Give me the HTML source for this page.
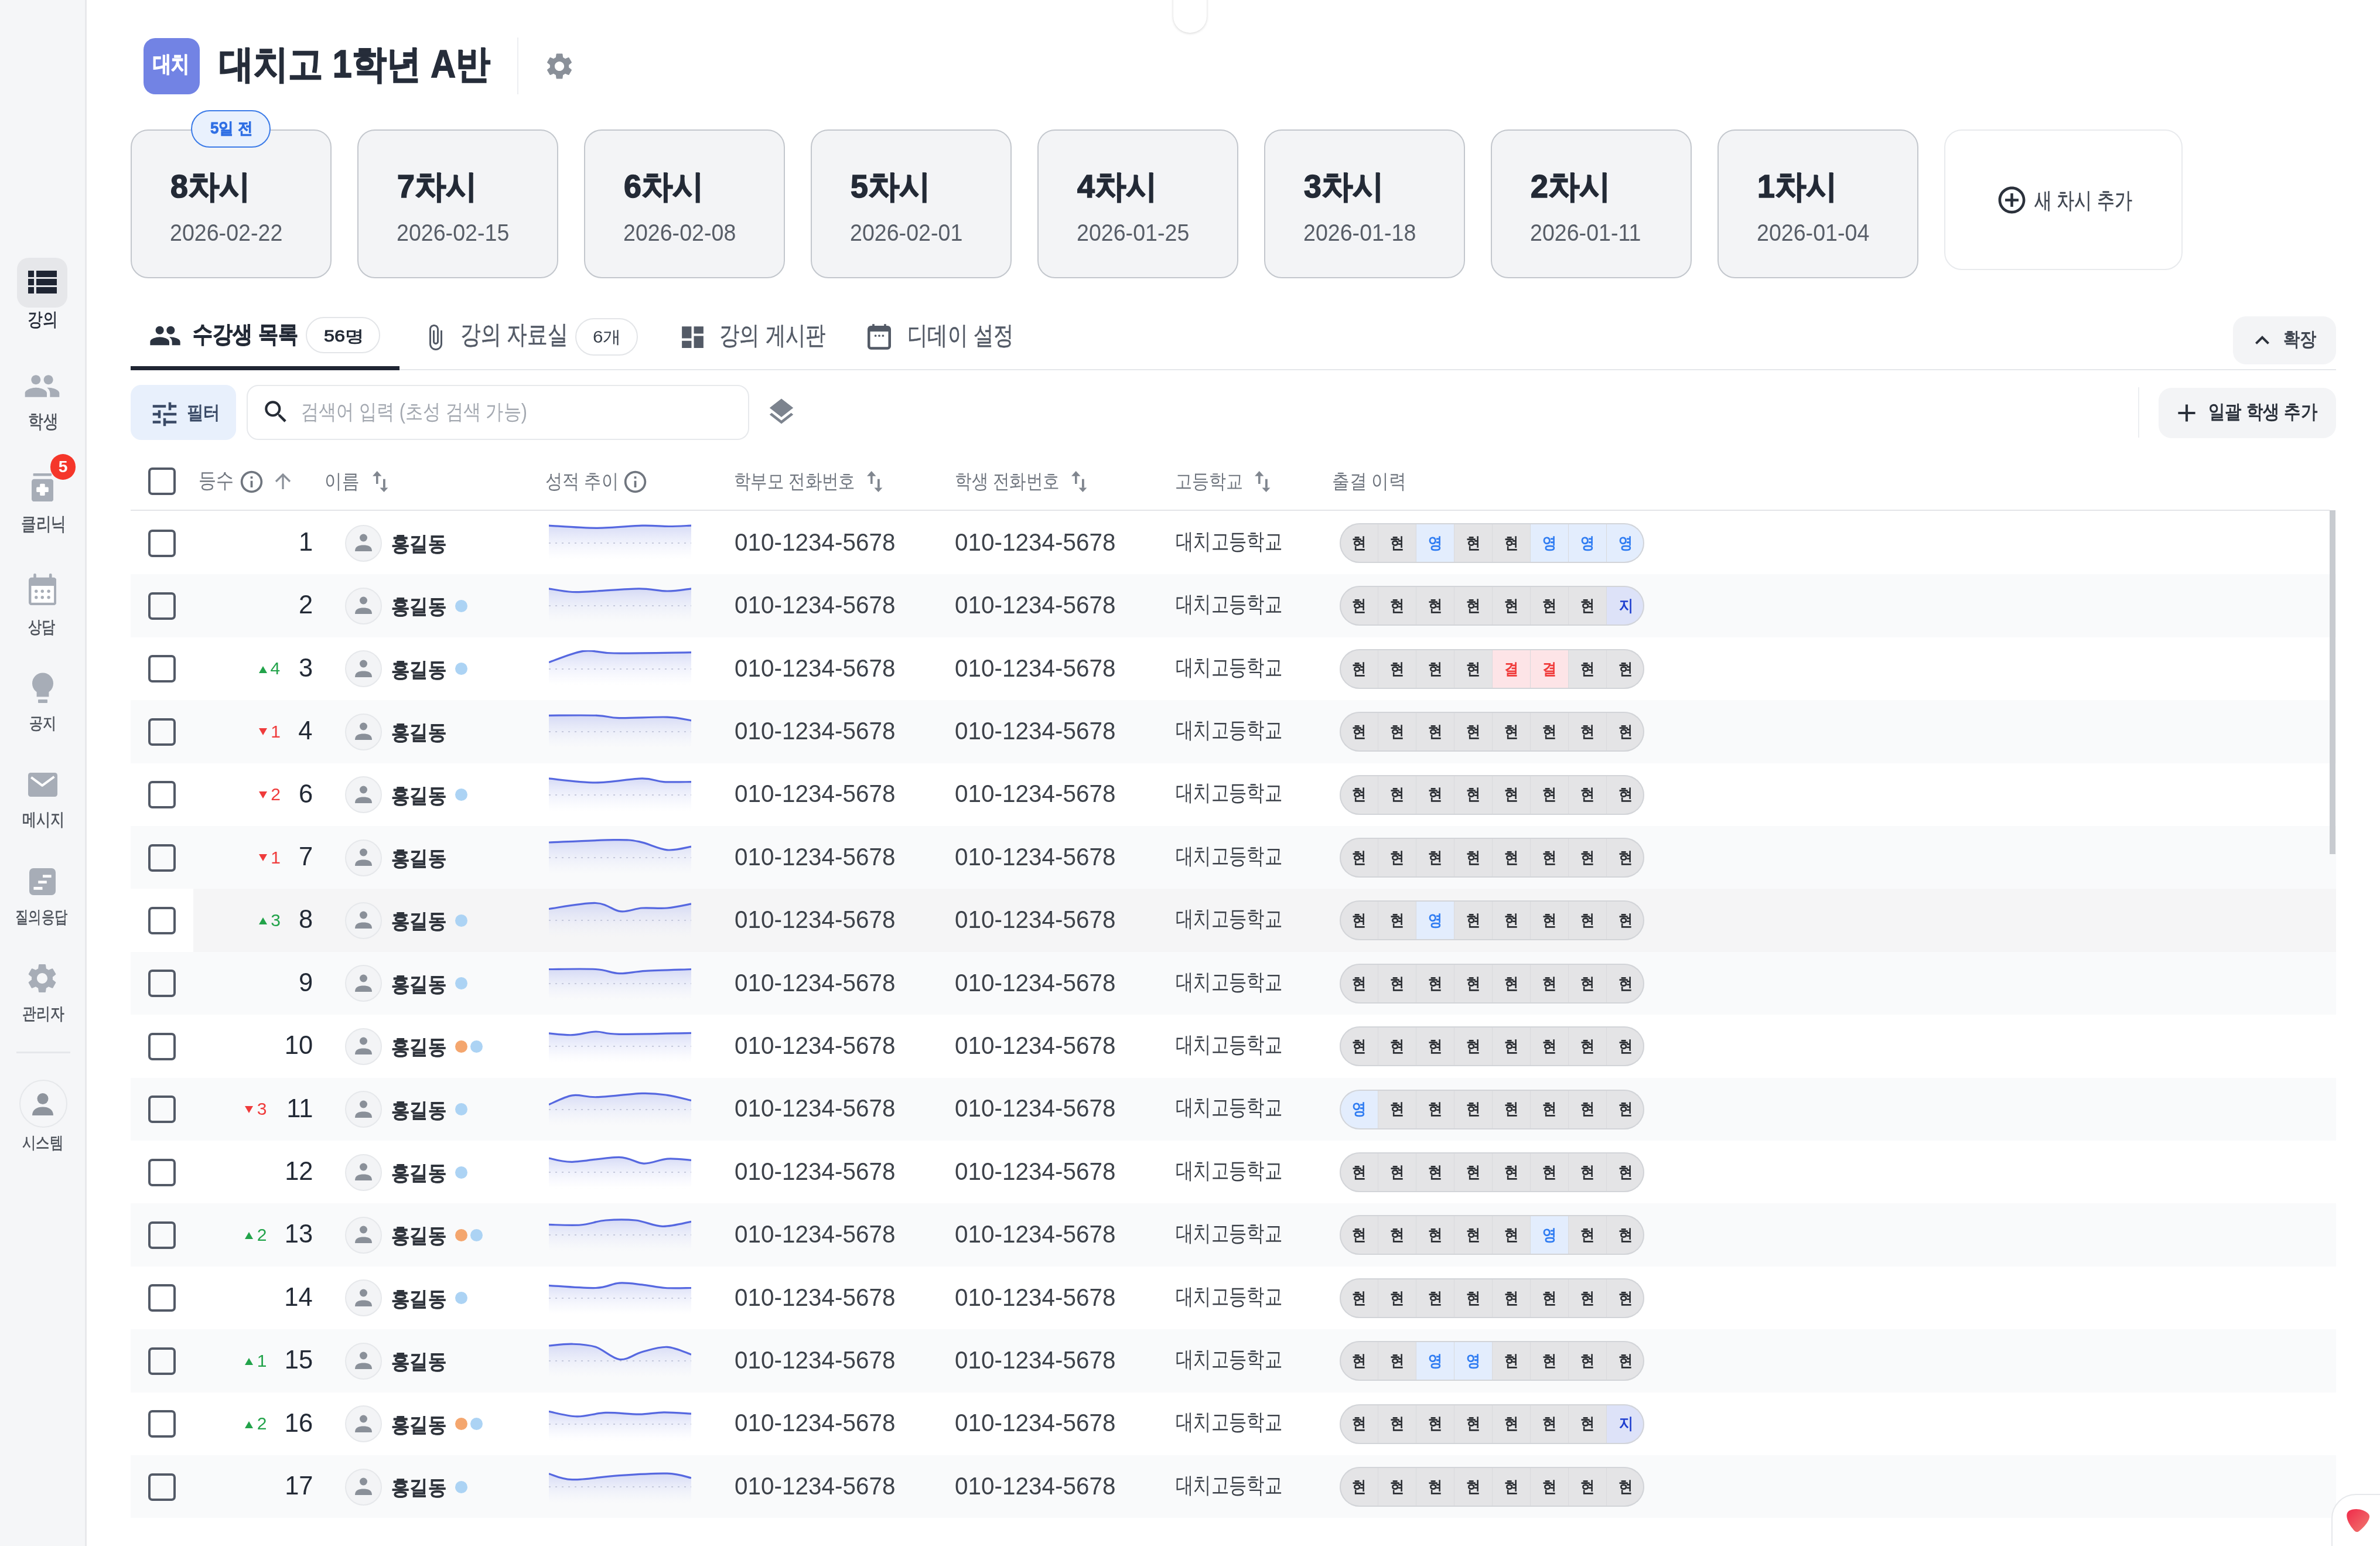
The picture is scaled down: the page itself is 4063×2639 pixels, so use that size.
<!DOCTYPE html><html><head><meta charset="utf-8"><style>
html,body{margin:0;padding:0}
body{width:4063px;height:2639px;position:relative;overflow:hidden;background:#fff;font-family:"Liberation Sans", sans-serif}
.t{position:absolute;white-space:nowrap;line-height:1;transform-origin:0 0}
.a{position:absolute}
</style></head><body><div style="position:absolute;left:0;top:0;width:4063px;height:2639px;filter:blur(0.6px)"><div class="a" style="left:0;top:0;width:145px;height:2639px;background:#f5f6f8;border-right:3px solid #e8e9eb"></div><div class="a" style="left:29px;top:440px;width:86px;height:85px;border-radius:20px;background:#e6e7ea"></div><svg style="position:absolute;left:48px;top:462px;width:49px;height:39px" viewBox="0 0 49 39"><rect x="0" y="0" width="10" height="11" fill="#1f2533"/><rect x="0" y="14" width="10" height="11" fill="#1f2533"/><rect x="0" y="28" width="10" height="11" fill="#1f2533"/><rect x="14" y="0" width="35" height="11" fill="#1f2533"/><rect x="14" y="14" width="35" height="11" fill="#1f2533"/><rect x="14" y="28" width="35" height="11" fill="#1f2533"/></svg><svg style="position:absolute;left:40px;top:627px;width:64px;height:64px" viewBox="0 0 24 24"><path fill="#a7adb7" d="M16 11c1.66 0 2.99-1.34 2.99-3S17.66 5 16 5c-1.66 0-3 1.34-3 3s1.34 3 3 3zm-8 0c1.66 0 2.99-1.34 2.99-3S9.66 5 8 5C6.34 5 5 6.34 5 8s1.34 3 3 3zm0 2c-2.33 0-7 1.17-7 3.5V19h14v-2.5c0-2.33-4.670-3.5-7-3.5zm8 0c-.29 0-.62.02-.97.05 1.16.84 1.97 1.97 1.97 3.45V19h6v-2.5c0-2.33-4.67-3.5-7-3.5z"/></svg><svg style="position:absolute;left:53.9px;top:808px;width:37.2px;height:48.4px" viewBox="0 0 37.2 48.4"><rect x="2.6" y="0" width="31.5" height="4.6" rx="1" fill="#a7adb7"/><rect x="0" y="9.8" width="37.2" height="38.6" rx="4.5" fill="#a7adb7"/><rect x="14.2" y="17.7" width="8.5" height="20.3" rx="1.5" fill="#fff"/><rect x="8.2" y="23.6" width="20.6" height="8.5" rx="1.5" fill="#fff"/></svg><div class="a" style="left:85.5px;top:775px;width:43.5px;height:43.5px;border-radius:50%;background:#f5362a"></div><svg style="position:absolute;left:48.6px;top:978.6px;width:47.4px;height:54.2px" viewBox="0 0 47.4 54.2"><rect x="8.2" y="0" width="4.6" height="9" rx="2" fill="#a7adb7"/><rect x="34.9" y="0" width="4.7" height="9" rx="2" fill="#a7adb7"/><rect x="0" y="6.7" width="47.4" height="47.5" rx="5" fill="#a7adb7"/><rect x="4.4" y="21" width="38.7" height="28.8" fill="#fff"/><circle cx="12.8" cy="30.3" r="2.7" fill="#a7adb7"/><circle cx="12.8" cy="40.8" r="2.7" fill="#a7adb7"/><circle cx="23.3" cy="30.3" r="2.7" fill="#a7adb7"/><circle cx="23.3" cy="40.8" r="2.7" fill="#a7adb7"/><circle cx="34.1" cy="30.3" r="2.7" fill="#a7adb7"/><circle cx="34.1" cy="40.8" r="2.7" fill="#a7adb7"/></svg><svg style="position:absolute;left:54px;top:1148px;width:38px;height:53px" viewBox="0 0 38 53"><circle cx="19" cy="18.5" r="18" fill="#a7adb7"/><path d="M8.6 26 L29.4 26 L29.4 41.4 L8.6 41.4 Z" fill="#a7adb7"/><rect x="11" y="46" width="16" height="6" rx="1" fill="#a7adb7"/></svg><svg style="position:absolute;left:47.6px;top:1319px;width:50px;height:41px" viewBox="0 0 50 41"><rect x="0" y="0" width="50" height="41" rx="4.5" fill="#a7adb7"/><path d="M5.2 7.9 L24.1 21.9 L44.5 6.9" fill="none" stroke="#fff" stroke-width="4" stroke-linejoin="round"/></svg><svg style="position:absolute;left:50.2px;top:1481.6px;width:45px;height:46px" viewBox="0 0 45 46"><rect x="0" y="0" width="45" height="46" rx="7" fill="#a7adb7"/><rect x="23" y="11.4" width="14.6" height="4.6" fill="#fff"/><rect x="15.2" y="21.4" width="14.6" height="4.7" fill="#fff"/><rect x="7.4" y="31.9" width="15.1" height="4.9" fill="#fff"/></svg><svg style="position:absolute;left:42px;top:1640px;width:60px;height:60px" viewBox="0 0 24 24"><path fill="#a7adb7" d="M19.14 12.94c.04-.3.06-.61.06-.94 0-.32-.02-.64-.07-.94l2.03-1.58a.49.49 0 0 0 .12-.61l-1.92-3.32a.488.488 0 0 0-.59-.22l-2.39.96c-.5-.38-1.03-.7-1.62-.94l-.36-2.54a.484.484 0 0 0-.48-.41h-3.84c-.24 0-.43.17-.47.41l-.36 2.54c-.59.24-1.13.57-1.62.94l-2.39-.96c-.22-.08-.47 0-.59.22L2.74 8.87c-.12.21-.08.47.12.61l2.03 1.58c-.05.3-.09.63-.09.94s.02.64.07.94l-2.03 1.58a.49.49 0 0 0-.12.61l1.92 3.32c.12.22.37.29.59.22l2.39-.96c.5.38 1.03.7 1.62.94l.36 2.54c.05.24.24.41.48.41h3.84c.24 0 .44-.17.47-.41l.36-2.54c.59-.24 1.13-.56 1.62-.94l2.39.96c.22.08.47 0 .59-.22l1.92-3.32c.12-.22.07-.47-.12-.61l-2.01-1.58zM12 15.6c-1.98 0-3.6-1.62-3.6-3.6s1.62-3.6 3.6-3.6 3.6 1.62 3.6 3.6-1.62 3.6-3.6 3.6z"/></svg><div class="a" style="left:28px;top:1795px;width:92px;height:3px;background:#e5e7eb"></div><div class="a" style="left:33px;top:1843px;width:78px;height:78px;border-radius:50%;border:2px solid #e6e8eb"></div><svg style="position:absolute;left:55px;top:1866px;width:36px;height:38px" viewBox="0 0 36 38"><circle cx="18" cy="9.5" r="9.5" fill="#8e949d"/><path d="M0 38 C0 28 8 23.5 18 23.5 C28 23.5 36 28 36 38 Z" fill="#8e949d"/></svg><div class="a" style="left:245px;top:65px;width:96px;height:96px;border-radius:20px;background:#7283e4"></div><div class="a" style="left:883px;top:64px;width:2px;height:97px;background:#eceef1"></div><svg style="position:absolute;left:928px;top:86px;width:54px;height:54px" viewBox="0 0 24 24"><path fill="#8a9099" d="M19.14 12.94c.04-.3.06-.61.06-.94 0-.32-.02-.64-.07-.94l2.03-1.58a.49.49 0 0 0 .12-.61l-1.92-3.32a.488.488 0 0 0-.59-.22l-2.39.96c-.5-.38-1.03-.7-1.62-.94l-.36-2.54a.484.484 0 0 0-.48-.41h-3.84c-.24 0-.43.17-.47.41l-.36 2.54c-.59.24-1.13.57-1.62.94l-2.39-.96c-.22-.08-.47 0-.59.22L2.74 8.87c-.12.21-.08.47.12.61l2.03 1.58c-.05.3-.09.63-.09.94s.02.64.07.94l-2.03 1.58a.49.49 0 0 0-.12.61l1.92 3.32c.12.22.37.29.59.22l2.39-.96c.5.38 1.03.7 1.62.94l.36 2.54c.05.24.24.41.48.41h3.84c.24 0 .44-.17.47-.41l.36-2.54c.59-.24 1.13-.56 1.62-.94l2.39.96c.22.08.47 0 .59-.22l1.92-3.32c.12-.22.07-.47-.12-.61l-2.01-1.58zM12 15.6c-1.98 0-3.6-1.62-3.6-3.6s1.62-3.6 3.6-3.6 3.6 1.62 3.6 3.6-1.62 3.6-3.6 3.6z"/></svg><div class="a" style="left:2003px;top:-40px;width:57px;height:96px;border-radius:28px;background:#fff;box-shadow:0 1px 4px rgba(0,0,0,0.18)"></div><div class="a" style="left:223px;top:221px;width:339px;height:250px;border:2.5px solid #c3c7cd;border-radius:30px;background:#f3f4f6"></div><div class="a" style="left:610px;top:221px;width:339px;height:250px;border:2.5px solid #c3c7cd;border-radius:30px;background:#f3f4f6"></div><div class="a" style="left:997px;top:221px;width:339px;height:250px;border:2.5px solid #c3c7cd;border-radius:30px;background:#f3f4f6"></div><div class="a" style="left:1384px;top:221px;width:339px;height:250px;border:2.5px solid #c3c7cd;border-radius:30px;background:#f3f4f6"></div><div class="a" style="left:1771px;top:221px;width:339px;height:250px;border:2.5px solid #c3c7cd;border-radius:30px;background:#f3f4f6"></div><div class="a" style="left:2158px;top:221px;width:339px;height:250px;border:2.5px solid #c3c7cd;border-radius:30px;background:#f3f4f6"></div><div class="a" style="left:2545px;top:221px;width:339px;height:250px;border:2.5px solid #c3c7cd;border-radius:30px;background:#f3f4f6"></div><div class="a" style="left:2932px;top:221px;width:339px;height:250px;border:2.5px solid #c3c7cd;border-radius:30px;background:#f3f4f6"></div><div class="a" style="left:326px;top:188px;width:132px;height:60px;border:2.5px solid #3b7be8;border-radius:32px;background:#e9f1fd"></div><div class="a" style="left:3319px;top:221px;width:403px;height:236px;border:2px solid #e8eaed;border-radius:30px;background:#fff"></div><svg style="position:absolute;left:3407px;top:314px;width:55px;height:55px" viewBox="0 0 24 24"><path fill="#2b313b" d="M13 7h-2v4H7v2h4v4h2v-4h4v-2h-4V7zm-1-5C6.48 2 2 6.48 2 12s4.48 10 10 10 10-4.480 10-10S17.52 2 12 2zm0 18c-4.41 0-8-3.59-8-8s3.59-8 8-8 8 3.59 8 8-3.59 8-8 8z"/></svg><div class="a" style="left:223px;top:630px;width:3765px;height:2px;background:#e5e7eb"></div><div class="a" style="left:223px;top:625px;width:459px;height:7px;background:#1f2533"></div><svg style="position:absolute;left:254px;top:545px;width:56px;height:56px" viewBox="0 0 24 24"><path fill="#2b3340" d="M16 11c1.66 0 2.99-1.34 2.99-3S17.66 5 16 5c-1.66 0-3 1.34-3 3s1.34 3 3 3zm-8 0c1.66 0 2.99-1.34 2.99-3S9.66 5 8 5C6.34 5 5 6.34 5 8s1.34 3 3 3zm0 2c-2.33 0-7 1.17-7 3.5V19h14v-2.5c0-2.33-4.670-3.5-7-3.5zm8 0c-.29 0-.62.02-.97.05 1.16.84 1.97 1.97 1.97 3.45V19h6v-2.5c0-2.33-4.67-3.5-7-3.5z"/></svg><div class="a" style="left:522px;top:541px;width:123px;height:58px;border:2px solid #e3e5e8;border-radius:32px"></div><svg style="position:absolute;left:719px;top:551px;width:48px;height:50px" viewBox="0 0 24 24"><path fill="#535a66" d="M16.5 6v11.5c0 2.21-1.790 4-4 4s-4-1.79-4-4V5c0-1.38 1.12-2.5 2.5-2.5s2.5 1.12 2.5 2.5v10.5c0 .55-.45 1-1 1s-1-.45-1-1V6H10v9.5c0 1.38 1.12 2.5 2.5 2.5s2.5-1.12 2.5-2.5V5c0-2.21-1.79-4-4-4S7 2.79 7 5v12.5c0 3.04 2.46 5.5 5.5 5.5s5.5-2.46 5.5-5.5V6h-1.5z"/></svg><div class="a" style="left:982px;top:543px;width:103px;height:60px;border:2px solid #e3e5e8;border-radius:32px"></div><svg style="position:absolute;left:1158px;top:551px;width:49px;height:49px" viewBox="0 0 24 24"><path fill="#535a66" d="M3 13h8V3H3v10zm0 8h8v-6H3v6zm10 0h8V11h-8v10zm0-18v6h8V3h-8z"/></svg><svg style="position:absolute;left:1481px;top:553px;width:40px;height:44px" viewBox="0 0 44 48"><rect x="9" y="0" width="4" height="8" fill="#535a66"/><rect x="31" y="0" width="4" height="8" fill="#535a66"/><rect x="2.5" y="5.5" width="39" height="40" rx="4" fill="none" stroke="#535a66" stroke-width="5"/><rect x="2" y="5" width="40" height="9" fill="#535a66"/><circle cx="15" cy="22" r="2" fill="#535a66"/><circle cx="22" cy="22" r="2" fill="#535a66"/><circle cx="29" cy="22" r="2" fill="#535a66"/></svg><div class="a" style="left:3812px;top:540px;width:176px;height:82px;border-radius:22px;background:#f3f4f6"></div><svg style="position:absolute;left:3838px;top:557px;width:48px;height:48px" viewBox="0 0 24 24"><path fill="#2b313b" d="M12 8l-6 6 1.41 1.41L12 10.83l4.59 4.58L18 14z"/></svg><div class="a" style="left:223px;top:657px;width:180px;height:94px;border-radius:18px;background:#e8f0fc"></div><svg style="position:absolute;left:254px;top:680px;width:54px;height:54px" viewBox="0 0 24 24"><path fill="#3a4a66" d="M3 17v2h6v-2H3zM3 5v2h10V5H3zm10 16v-2h8v-2h-8v-2h-2v6h2zM7 9v2H3v2h4v2h2V9H7zm14 4v-2H11v2h10zm-6-4h2V7h4V5h-4V3h-2v6z"/></svg><div class="a" style="left:421px;top:657px;width:854px;height:90px;border:2px solid #e7e9ec;border-radius:20px;background:#fff"></div><svg style="position:absolute;left:446px;top:678px;width:50px;height:50px" viewBox="0 0 24 24"><path fill="#252b35" d="M15.5 14h-.79l-.28-.27A6.471 6.471 0 0 0 16 9.5 6.5 6.5 0 1 0 9.5 16c1.61 0 3.09-.59 4.23-1.57l.27.28v.79l5 4.99L20.49 19l-4.99-5zm-6 0C7.01 14 5 11.99 5 9.5S7.01 5 9.5 5 14 7.01 14 9.5 11.99 14 9.5 14z"/></svg><svg style="position:absolute;left:1307px;top:676px;width:54px;height:54px" viewBox="0 0 24 24"><path fill="#7c838e" d="M11.99 18.54l-7.37-5.73L3 14.07l9 7 9-7-1.63-1.27-7.38 5.74zM12 16l7.36-5.73L21 9l-9-7-9 7 1.63 1.27L12 16z"/></svg><div class="a" style="left:3650px;top:661px;width:2px;height:86px;background:#eceef1"></div><div class="a" style="left:3685px;top:662px;width:303px;height:86px;border-radius:22px;background:#f3f4f6"></div><svg style="position:absolute;left:3708px;top:680px;width:50px;height:50px" viewBox="0 0 24 24"><path fill="#2b313b" d="M19 13h-6v6h-2v-6H5v-2h6V5h2v6h6v2z"/></svg><div class="a" style="left:253px;top:798px;width:47px;height:47px;box-sizing:border-box;border:4.7px solid #535a67;border-radius:7px"></div><svg style="position:absolute;left:407px;top:800px;width:45px;height:45px" viewBox="0 0 24 24"><path fill="#70767f" d="M11 7h2v2h-2zm0 4h2v6h-2zm1-9C6.48 2 2 6.48 2 12s4.48 10 10 10 10-4.48 10-10S17.52 2 12 2zm0 18c-4.41 0-8-3.59-8-8s3.59-8 8-8 8 3.59 8 8-3.59 8-8 8z"/></svg><svg style="position:absolute;left:469px;top:808px;width:28px;height:28px" viewBox="0 0 28 28"><path d="M14 27V3M2 14L14 2L26 14" fill="none" stroke="#8a9099" stroke-width="3.2"/></svg><svg style="position:absolute;left:636px;top:804px;width:27px;height:36px" viewBox="0 0 27 36"><polygon points="0,8.7 7.75,0 15.5,8.7" fill="#80868f"/><rect x="6" y="8" width="3.6" height="14" fill="#80868f"/><rect x="18" y="13.7" width="3.8" height="15" fill="#80868f"/><polygon points="12.5,28.4 26.4,28.4 19.5,36" fill="#80868f"/></svg><svg style="position:absolute;left:1062px;top:800px;width:45px;height:45px" viewBox="0 0 24 24"><path fill="#70767f" d="M11 7h2v2h-2zm0 4h2v6h-2zm1-9C6.48 2 2 6.48 2 12s4.48 10 10 10 10-4.48 10-10S17.52 2 12 2zm0 18c-4.41 0-8-3.59-8-8s3.59-8 8-8 8 3.59 8 8-3.59 8-8 8z"/></svg><svg style="position:absolute;left:1480px;top:804px;width:27px;height:36px" viewBox="0 0 27 36"><polygon points="0,8.7 7.75,0 15.5,8.7" fill="#80868f"/><rect x="6" y="8" width="3.6" height="14" fill="#80868f"/><rect x="18" y="13.7" width="3.8" height="15" fill="#80868f"/><polygon points="12.5,28.4 26.4,28.4 19.5,36" fill="#80868f"/></svg><svg style="position:absolute;left:1829px;top:804px;width:27px;height:36px" viewBox="0 0 27 36"><polygon points="0,8.7 7.75,0 15.5,8.7" fill="#80868f"/><rect x="6" y="8" width="3.6" height="14" fill="#80868f"/><rect x="18" y="13.7" width="3.8" height="15" fill="#80868f"/><polygon points="12.5,28.4 26.4,28.4 19.5,36" fill="#80868f"/></svg><svg style="position:absolute;left:2142px;top:804px;width:27px;height:36px" viewBox="0 0 27 36"><polygon points="0,8.7 7.75,0 15.5,8.7" fill="#80868f"/><rect x="6" y="8" width="3.6" height="14" fill="#80868f"/><rect x="18" y="13.7" width="3.8" height="15" fill="#80868f"/><polygon points="12.5,28.4 26.4,28.4 19.5,36" fill="#80868f"/></svg><div class="a" style="left:223px;top:870px;width:3754px;height:2px;background:#e3e5e8"></div><div class="a" style="left:253px;top:903.5px;width:47px;height:47px;box-sizing:border-box;border:4.7px solid #535a67;border-radius:7px"></div><div class="a" style="left:588.5px;top:895.5px;width:59px;height:59px;border-radius:50%;background:#f3f4f6;border:2px solid #e6e8eb"></div><svg style="position:absolute;left:604px;top:911.0px;width:34px;height:34px" viewBox="0 0 34 34"><circle cx="16.5" cy="7" r="6.5" fill="#8a9099"/><path d="M2 30 C2 21 9 19.5 16.5 19.5 C24 19.5 31 21 31 30 Z" fill="#8a9099"/></svg><svg style="position:absolute;left:937px;top:895.0px;width:243px;height:60px" viewBox="0 0 243 60"><defs><linearGradient id="g0" x1="0" y1="0" x2="0" y2="1"><stop offset="0" stop-color="#c9cff3" stop-opacity="0.75"/><stop offset="1" stop-color="#e6e9fa" stop-opacity="0"/></linearGradient></defs><path d="M0,2.1 C13.8,2.8 56.0,6.3 82.5,6.3 C109.0,6.3 138.6,2.6 159,2.1 C179.4,1.6 191.0,3.5 205,3.5 C219.0,3.5 236.7,2.3 243,2.1 L243,60 L0,60 Z" fill="url(#g0)"/><line x1="0" y1="32" x2="243" y2="32" stroke="#c5c9dc" stroke-width="2" stroke-dasharray="3 8"/><path d="M0,2.1 C13.8,2.8 56.0,6.3 82.5,6.3 C109.0,6.3 138.6,2.6 159,2.1 C179.4,1.6 191.0,3.5 205,3.5 C219.0,3.5 236.7,2.3 243,2.1" fill="none" stroke="#5668e0" stroke-width="3.2"/></svg><div class="a" style="left:2287px;top:893.0px;width:520px;height:68px;border-radius:34px;overflow:hidden;box-shadow:inset 0 0 0 2px #d2d4d8"><div style="position:absolute;left:0px;top:0;width:65px;height:68px;background:#e4e4e6;box-sizing:border-box"></div><div style="position:absolute;left:65px;top:0;width:65px;height:68px;background:#e4e4e6;border-left:1px solid #d9dadd;box-sizing:border-box"></div><div style="position:absolute;left:130px;top:0;width:65px;height:68px;background:#e3edfd;border-left:1px solid #d9dadd;box-sizing:border-box"></div><div style="position:absolute;left:195px;top:0;width:65px;height:68px;background:#e4e4e6;border-left:1px solid #d9dadd;box-sizing:border-box"></div><div style="position:absolute;left:260px;top:0;width:65px;height:68px;background:#e4e4e6;border-left:1px solid #d9dadd;box-sizing:border-box"></div><div style="position:absolute;left:325px;top:0;width:65px;height:68px;background:#e3edfd;border-left:1px solid #d9dadd;box-sizing:border-box"></div><div style="position:absolute;left:390px;top:0;width:65px;height:68px;background:#e3edfd;border-left:1px solid #d9dadd;box-sizing:border-box"></div><div style="position:absolute;left:455px;top:0;width:65px;height:68px;background:#e3edfd;border-left:1px solid #d9dadd;box-sizing:border-box"></div><div style="position:absolute;inset:0;border-radius:34px;box-shadow:inset 0 0 0 2px #d2d4d8"></div></div><div class="a" style="left:223px;top:980.4px;width:3765px;height:107.4px;background:#f9fafb"></div><div class="a" style="left:253px;top:1010.9px;width:47px;height:47px;box-sizing:border-box;border:4.7px solid #535a67;border-radius:7px"></div><div class="a" style="left:588.5px;top:1002.9px;width:59px;height:59px;border-radius:50%;background:#f3f4f6;border:2px solid #e6e8eb"></div><svg style="position:absolute;left:604px;top:1018.4000000000001px;width:34px;height:34px" viewBox="0 0 34 34"><circle cx="16.5" cy="7" r="6.5" fill="#8a9099"/><path d="M2 30 C2 21 9 19.5 16.5 19.5 C24 19.5 31 21 31 30 Z" fill="#8a9099"/></svg><div class="a" style="left:777px;top:1023.9px;width:21px;height:21px;border-radius:50%;background:#acd3f4"></div><svg style="position:absolute;left:937px;top:1002.4px;width:243px;height:60px" viewBox="0 0 243 60"><defs><linearGradient id="g1" x1="0" y1="0" x2="0" y2="1"><stop offset="0" stop-color="#c9cff3" stop-opacity="0.75"/><stop offset="1" stop-color="#e6e9fa" stop-opacity="0"/></linearGradient></defs><path d="M0,2.8 C6.7,3.8 26.3,7.8 40,8.5 C53.7,9.2 63.0,8.0 82,7 C101.0,6.0 134.0,2.8 154,2.8 C174.0,2.8 187.2,7.0 202,7 C216.8,7.0 236.2,3.5 243,2.8 L243,60 L0,60 Z" fill="url(#g1)"/><line x1="0" y1="32" x2="243" y2="32" stroke="#c5c9dc" stroke-width="2" stroke-dasharray="3 8"/><path d="M0,2.8 C6.7,3.8 26.3,7.8 40,8.5 C53.7,9.2 63.0,8.0 82,7 C101.0,6.0 134.0,2.8 154,2.8 C174.0,2.8 187.2,7.0 202,7 C216.8,7.0 236.2,3.5 243,2.8" fill="none" stroke="#5668e0" stroke-width="3.2"/></svg><div class="a" style="left:2287px;top:1000.4px;width:520px;height:68px;border-radius:34px;overflow:hidden;box-shadow:inset 0 0 0 2px #d2d4d8"><div style="position:absolute;left:0px;top:0;width:65px;height:68px;background:#e4e4e6;box-sizing:border-box"></div><div style="position:absolute;left:65px;top:0;width:65px;height:68px;background:#e4e4e6;border-left:1px solid #d9dadd;box-sizing:border-box"></div><div style="position:absolute;left:130px;top:0;width:65px;height:68px;background:#e4e4e6;border-left:1px solid #d9dadd;box-sizing:border-box"></div><div style="position:absolute;left:195px;top:0;width:65px;height:68px;background:#e4e4e6;border-left:1px solid #d9dadd;box-sizing:border-box"></div><div style="position:absolute;left:260px;top:0;width:65px;height:68px;background:#e4e4e6;border-left:1px solid #d9dadd;box-sizing:border-box"></div><div style="position:absolute;left:325px;top:0;width:65px;height:68px;background:#e4e4e6;border-left:1px solid #d9dadd;box-sizing:border-box"></div><div style="position:absolute;left:390px;top:0;width:65px;height:68px;background:#e4e4e6;border-left:1px solid #d9dadd;box-sizing:border-box"></div><div style="position:absolute;left:455px;top:0;width:65px;height:68px;background:#dde2f8;border-left:1px solid #d9dadd;box-sizing:border-box"></div><div style="position:absolute;inset:0;border-radius:34px;box-shadow:inset 0 0 0 2px #d2d4d8"></div></div><div class="a" style="left:253px;top:1118.3px;width:47px;height:47px;box-sizing:border-box;border:4.7px solid #535a67;border-radius:7px"></div><svg style="position:absolute;left:441.8px;top:1136.8px;width:14px;height:12px" viewBox="0 0 14 12"><polygon points="0,12 7,0 14,12" fill="#22a34a"/></svg><div class="a" style="left:588.5px;top:1110.3px;width:59px;height:59px;border-radius:50%;background:#f3f4f6;border:2px solid #e6e8eb"></div><svg style="position:absolute;left:604px;top:1125.8px;width:34px;height:34px" viewBox="0 0 34 34"><circle cx="16.5" cy="7" r="6.5" fill="#8a9099"/><path d="M2 30 C2 21 9 19.5 16.5 19.5 C24 19.5 31 21 31 30 Z" fill="#8a9099"/></svg><div class="a" style="left:777px;top:1131.3px;width:21px;height:21px;border-radius:50%;background:#acd3f4"></div><svg style="position:absolute;left:937px;top:1109.8px;width:243px;height:60px" viewBox="0 0 243 60"><defs><linearGradient id="g2" x1="0" y1="0" x2="0" y2="1"><stop offset="0" stop-color="#c9cff3" stop-opacity="0.75"/><stop offset="1" stop-color="#e6e9fa" stop-opacity="0"/></linearGradient></defs><path d="M0,20.6 C9.8,17.4 40.5,3.9 59,1.3 C77.5,-1.3 80.3,4.6 111,5 C141.7,5.4 221.0,3.8 243,3.6 L243,60 L0,60 Z" fill="url(#g2)"/><line x1="0" y1="32" x2="243" y2="32" stroke="#c5c9dc" stroke-width="2" stroke-dasharray="3 8"/><path d="M0,20.6 C9.8,17.4 40.5,3.9 59,1.3 C77.5,-1.3 80.3,4.6 111,5 C141.7,5.4 221.0,3.8 243,3.6" fill="none" stroke="#5668e0" stroke-width="3.2"/></svg><div class="a" style="left:2287px;top:1107.8px;width:520px;height:68px;border-radius:34px;overflow:hidden;box-shadow:inset 0 0 0 2px #d2d4d8"><div style="position:absolute;left:0px;top:0;width:65px;height:68px;background:#e4e4e6;box-sizing:border-box"></div><div style="position:absolute;left:65px;top:0;width:65px;height:68px;background:#e4e4e6;border-left:1px solid #d9dadd;box-sizing:border-box"></div><div style="position:absolute;left:130px;top:0;width:65px;height:68px;background:#e4e4e6;border-left:1px solid #d9dadd;box-sizing:border-box"></div><div style="position:absolute;left:195px;top:0;width:65px;height:68px;background:#e4e4e6;border-left:1px solid #d9dadd;box-sizing:border-box"></div><div style="position:absolute;left:260px;top:0;width:65px;height:68px;background:#fde4e7;border-left:1px solid #d9dadd;box-sizing:border-box"></div><div style="position:absolute;left:325px;top:0;width:65px;height:68px;background:#fde4e7;border-left:1px solid #d9dadd;box-sizing:border-box"></div><div style="position:absolute;left:390px;top:0;width:65px;height:68px;background:#e4e4e6;border-left:1px solid #d9dadd;box-sizing:border-box"></div><div style="position:absolute;left:455px;top:0;width:65px;height:68px;background:#e4e4e6;border-left:1px solid #d9dadd;box-sizing:border-box"></div><div style="position:absolute;inset:0;border-radius:34px;box-shadow:inset 0 0 0 2px #d2d4d8"></div></div><div class="a" style="left:223px;top:1195.2px;width:3765px;height:107.4px;background:#f9fafb"></div><div class="a" style="left:253px;top:1225.7px;width:47px;height:47px;box-sizing:border-box;border:4.7px solid #535a67;border-radius:7px"></div><svg style="position:absolute;left:441.8px;top:1243.2px;width:14px;height:12px" viewBox="0 0 14 12"><polygon points="0,0 14,0 7,12" fill="#ef3b3b"/></svg><div class="a" style="left:588.5px;top:1217.7px;width:59px;height:59px;border-radius:50%;background:#f3f4f6;border:2px solid #e6e8eb"></div><svg style="position:absolute;left:604px;top:1233.2px;width:34px;height:34px" viewBox="0 0 34 34"><circle cx="16.5" cy="7" r="6.5" fill="#8a9099"/><path d="M2 30 C2 21 9 19.5 16.5 19.5 C24 19.5 31 21 31 30 Z" fill="#8a9099"/></svg><svg style="position:absolute;left:937px;top:1217.2px;width:243px;height:60px" viewBox="0 0 243 60"><defs><linearGradient id="g3" x1="0" y1="0" x2="0" y2="1"><stop offset="0" stop-color="#c9cff3" stop-opacity="0.75"/><stop offset="1" stop-color="#e6e9fa" stop-opacity="0"/></linearGradient></defs><path d="M0,4.3 C13.7,4.3 62.0,3.6 82,4.3 C102.0,5.0 100.0,8.1 120,8.6 C140.0,9.1 181.5,6.4 202,7.1 C222.5,7.8 236.2,11.9 243,12.8 L243,60 L0,60 Z" fill="url(#g3)"/><line x1="0" y1="32" x2="243" y2="32" stroke="#c5c9dc" stroke-width="2" stroke-dasharray="3 8"/><path d="M0,4.3 C13.7,4.3 62.0,3.6 82,4.3 C102.0,5.0 100.0,8.1 120,8.6 C140.0,9.1 181.5,6.4 202,7.1 C222.5,7.8 236.2,11.9 243,12.8" fill="none" stroke="#5668e0" stroke-width="3.2"/></svg><div class="a" style="left:2287px;top:1215.2px;width:520px;height:68px;border-radius:34px;overflow:hidden;box-shadow:inset 0 0 0 2px #d2d4d8"><div style="position:absolute;left:0px;top:0;width:65px;height:68px;background:#e4e4e6;box-sizing:border-box"></div><div style="position:absolute;left:65px;top:0;width:65px;height:68px;background:#e4e4e6;border-left:1px solid #d9dadd;box-sizing:border-box"></div><div style="position:absolute;left:130px;top:0;width:65px;height:68px;background:#e4e4e6;border-left:1px solid #d9dadd;box-sizing:border-box"></div><div style="position:absolute;left:195px;top:0;width:65px;height:68px;background:#e4e4e6;border-left:1px solid #d9dadd;box-sizing:border-box"></div><div style="position:absolute;left:260px;top:0;width:65px;height:68px;background:#e4e4e6;border-left:1px solid #d9dadd;box-sizing:border-box"></div><div style="position:absolute;left:325px;top:0;width:65px;height:68px;background:#e4e4e6;border-left:1px solid #d9dadd;box-sizing:border-box"></div><div style="position:absolute;left:390px;top:0;width:65px;height:68px;background:#e4e4e6;border-left:1px solid #d9dadd;box-sizing:border-box"></div><div style="position:absolute;left:455px;top:0;width:65px;height:68px;background:#e4e4e6;border-left:1px solid #d9dadd;box-sizing:border-box"></div><div style="position:absolute;inset:0;border-radius:34px;box-shadow:inset 0 0 0 2px #d2d4d8"></div></div><div class="a" style="left:253px;top:1333.1px;width:47px;height:47px;box-sizing:border-box;border:4.7px solid #535a67;border-radius:7px"></div><svg style="position:absolute;left:441.8px;top:1350.6px;width:14px;height:12px" viewBox="0 0 14 12"><polygon points="0,0 14,0 7,12" fill="#ef3b3b"/></svg><div class="a" style="left:588.5px;top:1325.1px;width:59px;height:59px;border-radius:50%;background:#f3f4f6;border:2px solid #e6e8eb"></div><svg style="position:absolute;left:604px;top:1340.6px;width:34px;height:34px" viewBox="0 0 34 34"><circle cx="16.5" cy="7" r="6.5" fill="#8a9099"/><path d="M2 30 C2 21 9 19.5 16.5 19.5 C24 19.5 31 21 31 30 Z" fill="#8a9099"/></svg><div class="a" style="left:777px;top:1346.1px;width:21px;height:21px;border-radius:50%;background:#acd3f4"></div><svg style="position:absolute;left:937px;top:1324.6px;width:243px;height:60px" viewBox="0 0 243 60"><defs><linearGradient id="g4" x1="0" y1="0" x2="0" y2="1"><stop offset="0" stop-color="#c9cff3" stop-opacity="0.75"/><stop offset="1" stop-color="#e6e9fa" stop-opacity="0"/></linearGradient></defs><path d="M0,3.9 C13.3,5.1 53.5,10.9 80,10.9 C106.5,10.9 139.7,4.1 159,3.9 C178.3,3.7 182.0,8.7 196,9.6 C210.0,10.5 235.2,9.6 243,9.6 L243,60 L0,60 Z" fill="url(#g4)"/><line x1="0" y1="32" x2="243" y2="32" stroke="#c5c9dc" stroke-width="2" stroke-dasharray="3 8"/><path d="M0,3.9 C13.3,5.1 53.5,10.9 80,10.9 C106.5,10.9 139.7,4.1 159,3.9 C178.3,3.7 182.0,8.7 196,9.6 C210.0,10.5 235.2,9.6 243,9.6" fill="none" stroke="#5668e0" stroke-width="3.2"/></svg><div class="a" style="left:2287px;top:1322.6px;width:520px;height:68px;border-radius:34px;overflow:hidden;box-shadow:inset 0 0 0 2px #d2d4d8"><div style="position:absolute;left:0px;top:0;width:65px;height:68px;background:#e4e4e6;box-sizing:border-box"></div><div style="position:absolute;left:65px;top:0;width:65px;height:68px;background:#e4e4e6;border-left:1px solid #d9dadd;box-sizing:border-box"></div><div style="position:absolute;left:130px;top:0;width:65px;height:68px;background:#e4e4e6;border-left:1px solid #d9dadd;box-sizing:border-box"></div><div style="position:absolute;left:195px;top:0;width:65px;height:68px;background:#e4e4e6;border-left:1px solid #d9dadd;box-sizing:border-box"></div><div style="position:absolute;left:260px;top:0;width:65px;height:68px;background:#e4e4e6;border-left:1px solid #d9dadd;box-sizing:border-box"></div><div style="position:absolute;left:325px;top:0;width:65px;height:68px;background:#e4e4e6;border-left:1px solid #d9dadd;box-sizing:border-box"></div><div style="position:absolute;left:390px;top:0;width:65px;height:68px;background:#e4e4e6;border-left:1px solid #d9dadd;box-sizing:border-box"></div><div style="position:absolute;left:455px;top:0;width:65px;height:68px;background:#e4e4e6;border-left:1px solid #d9dadd;box-sizing:border-box"></div><div style="position:absolute;inset:0;border-radius:34px;box-shadow:inset 0 0 0 2px #d2d4d8"></div></div><div class="a" style="left:223px;top:1410.0px;width:3765px;height:107.4px;background:#f9fafb"></div><div class="a" style="left:253px;top:1440.5px;width:47px;height:47px;box-sizing:border-box;border:4.7px solid #535a67;border-radius:7px"></div><svg style="position:absolute;left:441.8px;top:1458.0px;width:14px;height:12px" viewBox="0 0 14 12"><polygon points="0,0 14,0 7,12" fill="#ef3b3b"/></svg><div class="a" style="left:588.5px;top:1432.5px;width:59px;height:59px;border-radius:50%;background:#f3f4f6;border:2px solid #e6e8eb"></div><svg style="position:absolute;left:604px;top:1448.0px;width:34px;height:34px" viewBox="0 0 34 34"><circle cx="16.5" cy="7" r="6.5" fill="#8a9099"/><path d="M2 30 C2 21 9 19.5 16.5 19.5 C24 19.5 31 21 31 30 Z" fill="#8a9099"/></svg><svg style="position:absolute;left:937px;top:1432.0px;width:243px;height:60px" viewBox="0 0 243 60"><defs><linearGradient id="g5" x1="0" y1="0" x2="0" y2="1"><stop offset="0" stop-color="#c9cff3" stop-opacity="0.75"/><stop offset="1" stop-color="#e6e9fa" stop-opacity="0"/></linearGradient></defs><path d="M0,6 C18.5,5.3 85.3,1.9 111,1.7 C136.7,1.5 138.8,1.7 154,4.6 C169.2,7.4 187.2,17.4 202,18.8 C216.8,20.2 236.2,14.1 243,13.1 L243,60 L0,60 Z" fill="url(#g5)"/><line x1="0" y1="32" x2="243" y2="32" stroke="#c5c9dc" stroke-width="2" stroke-dasharray="3 8"/><path d="M0,6 C18.5,5.3 85.3,1.9 111,1.7 C136.7,1.5 138.8,1.7 154,4.6 C169.2,7.4 187.2,17.4 202,18.8 C216.8,20.2 236.2,14.1 243,13.1" fill="none" stroke="#5668e0" stroke-width="3.2"/></svg><div class="a" style="left:2287px;top:1430.0px;width:520px;height:68px;border-radius:34px;overflow:hidden;box-shadow:inset 0 0 0 2px #d2d4d8"><div style="position:absolute;left:0px;top:0;width:65px;height:68px;background:#e4e4e6;box-sizing:border-box"></div><div style="position:absolute;left:65px;top:0;width:65px;height:68px;background:#e4e4e6;border-left:1px solid #d9dadd;box-sizing:border-box"></div><div style="position:absolute;left:130px;top:0;width:65px;height:68px;background:#e4e4e6;border-left:1px solid #d9dadd;box-sizing:border-box"></div><div style="position:absolute;left:195px;top:0;width:65px;height:68px;background:#e4e4e6;border-left:1px solid #d9dadd;box-sizing:border-box"></div><div style="position:absolute;left:260px;top:0;width:65px;height:68px;background:#e4e4e6;border-left:1px solid #d9dadd;box-sizing:border-box"></div><div style="position:absolute;left:325px;top:0;width:65px;height:68px;background:#e4e4e6;border-left:1px solid #d9dadd;box-sizing:border-box"></div><div style="position:absolute;left:390px;top:0;width:65px;height:68px;background:#e4e4e6;border-left:1px solid #d9dadd;box-sizing:border-box"></div><div style="position:absolute;left:455px;top:0;width:65px;height:68px;background:#e4e4e6;border-left:1px solid #d9dadd;box-sizing:border-box"></div><div style="position:absolute;inset:0;border-radius:34px;box-shadow:inset 0 0 0 2px #d2d4d8"></div></div><div class="a" style="left:330px;top:1517.4px;width:3658px;height:107.4px;background:#f5f5f6"></div><div class="a" style="left:253px;top:1547.9px;width:47px;height:47px;box-sizing:border-box;border:4.7px solid #535a67;border-radius:7px"></div><svg style="position:absolute;left:441.8px;top:1566.4px;width:14px;height:12px" viewBox="0 0 14 12"><polygon points="0,12 7,0 14,12" fill="#22a34a"/></svg><div class="a" style="left:588.5px;top:1539.9px;width:59px;height:59px;border-radius:50%;background:#f3f4f6;border:2px solid #e6e8eb"></div><svg style="position:absolute;left:604px;top:1555.4px;width:34px;height:34px" viewBox="0 0 34 34"><circle cx="16.5" cy="7" r="6.5" fill="#8a9099"/><path d="M2 30 C2 21 9 19.5 16.5 19.5 C24 19.5 31 21 31 30 Z" fill="#8a9099"/></svg><div class="a" style="left:777px;top:1560.9px;width:21px;height:21px;border-radius:50%;background:#acd3f4"></div><svg style="position:absolute;left:937px;top:1539.4px;width:243px;height:60px" viewBox="0 0 243 60"><defs><linearGradient id="g6" x1="0" y1="0" x2="0" y2="1"><stop offset="0" stop-color="#c9cff3" stop-opacity="0.75"/><stop offset="1" stop-color="#e6e9fa" stop-opacity="0"/></linearGradient></defs><path d="M0,12.5 C13.3,10.8 59.7,1.8 80,2.5 C100.3,3.2 108.8,15.3 122,16.7 C135.2,18.1 145.7,11.9 159,11 C172.3,10.1 188.0,12.2 202,11 C216.0,9.8 236.2,5.1 243,3.9 L243,60 L0,60 Z" fill="url(#g6)"/><line x1="0" y1="32" x2="243" y2="32" stroke="#c5c9dc" stroke-width="2" stroke-dasharray="3 8"/><path d="M0,12.5 C13.3,10.8 59.7,1.8 80,2.5 C100.3,3.2 108.8,15.3 122,16.7 C135.2,18.1 145.7,11.9 159,11 C172.3,10.1 188.0,12.2 202,11 C216.0,9.8 236.2,5.1 243,3.9" fill="none" stroke="#5668e0" stroke-width="3.2"/></svg><div class="a" style="left:2287px;top:1537.4px;width:520px;height:68px;border-radius:34px;overflow:hidden;box-shadow:inset 0 0 0 2px #d2d4d8"><div style="position:absolute;left:0px;top:0;width:65px;height:68px;background:#e4e4e6;box-sizing:border-box"></div><div style="position:absolute;left:65px;top:0;width:65px;height:68px;background:#e4e4e6;border-left:1px solid #d9dadd;box-sizing:border-box"></div><div style="position:absolute;left:130px;top:0;width:65px;height:68px;background:#e3edfd;border-left:1px solid #d9dadd;box-sizing:border-box"></div><div style="position:absolute;left:195px;top:0;width:65px;height:68px;background:#e4e4e6;border-left:1px solid #d9dadd;box-sizing:border-box"></div><div style="position:absolute;left:260px;top:0;width:65px;height:68px;background:#e4e4e6;border-left:1px solid #d9dadd;box-sizing:border-box"></div><div style="position:absolute;left:325px;top:0;width:65px;height:68px;background:#e4e4e6;border-left:1px solid #d9dadd;box-sizing:border-box"></div><div style="position:absolute;left:390px;top:0;width:65px;height:68px;background:#e4e4e6;border-left:1px solid #d9dadd;box-sizing:border-box"></div><div style="position:absolute;left:455px;top:0;width:65px;height:68px;background:#e4e4e6;border-left:1px solid #d9dadd;box-sizing:border-box"></div><div style="position:absolute;inset:0;border-radius:34px;box-shadow:inset 0 0 0 2px #d2d4d8"></div></div><div class="a" style="left:223px;top:1624.8px;width:3765px;height:107.4px;background:#f9fafb"></div><div class="a" style="left:253px;top:1655.3px;width:47px;height:47px;box-sizing:border-box;border:4.7px solid #535a67;border-radius:7px"></div><div class="a" style="left:588.5px;top:1647.3px;width:59px;height:59px;border-radius:50%;background:#f3f4f6;border:2px solid #e6e8eb"></div><svg style="position:absolute;left:604px;top:1662.8000000000002px;width:34px;height:34px" viewBox="0 0 34 34"><circle cx="16.5" cy="7" r="6.5" fill="#8a9099"/><path d="M2 30 C2 21 9 19.5 16.5 19.5 C24 19.5 31 21 31 30 Z" fill="#8a9099"/></svg><div class="a" style="left:777px;top:1668.3px;width:21px;height:21px;border-radius:50%;background:#acd3f4"></div><svg style="position:absolute;left:937px;top:1646.8000000000002px;width:243px;height:60px" viewBox="0 0 243 60"><defs><linearGradient id="g7" x1="0" y1="0" x2="0" y2="1"><stop offset="0" stop-color="#c9cff3" stop-opacity="0.75"/><stop offset="1" stop-color="#e6e9fa" stop-opacity="0"/></linearGradient></defs><path d="M0,7.5 C13.3,7.5 60.0,6.3 80,7.5 C100.0,8.7 105.8,14.1 120,14.6 C134.2,15.1 144.5,11.5 165,10.3 C185.5,9.1 230.0,8.0 243,7.5 L243,60 L0,60 Z" fill="url(#g7)"/><line x1="0" y1="32" x2="243" y2="32" stroke="#c5c9dc" stroke-width="2" stroke-dasharray="3 8"/><path d="M0,7.5 C13.3,7.5 60.0,6.3 80,7.5 C100.0,8.7 105.8,14.1 120,14.6 C134.2,15.1 144.5,11.5 165,10.3 C185.5,9.1 230.0,8.0 243,7.5" fill="none" stroke="#5668e0" stroke-width="3.2"/></svg><div class="a" style="left:2287px;top:1644.8px;width:520px;height:68px;border-radius:34px;overflow:hidden;box-shadow:inset 0 0 0 2px #d2d4d8"><div style="position:absolute;left:0px;top:0;width:65px;height:68px;background:#e4e4e6;box-sizing:border-box"></div><div style="position:absolute;left:65px;top:0;width:65px;height:68px;background:#e4e4e6;border-left:1px solid #d9dadd;box-sizing:border-box"></div><div style="position:absolute;left:130px;top:0;width:65px;height:68px;background:#e4e4e6;border-left:1px solid #d9dadd;box-sizing:border-box"></div><div style="position:absolute;left:195px;top:0;width:65px;height:68px;background:#e4e4e6;border-left:1px solid #d9dadd;box-sizing:border-box"></div><div style="position:absolute;left:260px;top:0;width:65px;height:68px;background:#e4e4e6;border-left:1px solid #d9dadd;box-sizing:border-box"></div><div style="position:absolute;left:325px;top:0;width:65px;height:68px;background:#e4e4e6;border-left:1px solid #d9dadd;box-sizing:border-box"></div><div style="position:absolute;left:390px;top:0;width:65px;height:68px;background:#e4e4e6;border-left:1px solid #d9dadd;box-sizing:border-box"></div><div style="position:absolute;left:455px;top:0;width:65px;height:68px;background:#e4e4e6;border-left:1px solid #d9dadd;box-sizing:border-box"></div><div style="position:absolute;inset:0;border-radius:34px;box-shadow:inset 0 0 0 2px #d2d4d8"></div></div><div class="a" style="left:253px;top:1762.7px;width:47px;height:47px;box-sizing:border-box;border:4.7px solid #535a67;border-radius:7px"></div><div class="a" style="left:588.5px;top:1754.7px;width:59px;height:59px;border-radius:50%;background:#f3f4f6;border:2px solid #e6e8eb"></div><svg style="position:absolute;left:604px;top:1770.2px;width:34px;height:34px" viewBox="0 0 34 34"><circle cx="16.5" cy="7" r="6.5" fill="#8a9099"/><path d="M2 30 C2 21 9 19.5 16.5 19.5 C24 19.5 31 21 31 30 Z" fill="#8a9099"/></svg><div class="a" style="left:777px;top:1775.7px;width:21px;height:21px;border-radius:50%;background:#f4a66e"></div><div class="a" style="left:803px;top:1775.7px;width:21px;height:21px;border-radius:50%;background:#acd3f4"></div><svg style="position:absolute;left:937px;top:1754.2px;width:243px;height:60px" viewBox="0 0 243 60"><defs><linearGradient id="g8" x1="0" y1="0" x2="0" y2="1"><stop offset="0" stop-color="#c9cff3" stop-opacity="0.75"/><stop offset="1" stop-color="#e6e9fa" stop-opacity="0"/></linearGradient></defs><path d="M0,9.9 C6.7,10.4 26.7,13.2 40,12.7 C53.3,12.2 66.7,7.2 80,7 C93.3,6.8 92.8,10.9 120,11.3 C147.2,11.7 222.5,9.6 243,9.3 L243,60 L0,60 Z" fill="url(#g8)"/><line x1="0" y1="32" x2="243" y2="32" stroke="#c5c9dc" stroke-width="2" stroke-dasharray="3 8"/><path d="M0,9.9 C6.7,10.4 26.7,13.2 40,12.7 C53.3,12.2 66.7,7.2 80,7 C93.3,6.8 92.8,10.9 120,11.3 C147.2,11.7 222.5,9.6 243,9.3" fill="none" stroke="#5668e0" stroke-width="3.2"/></svg><div class="a" style="left:2287px;top:1752.2px;width:520px;height:68px;border-radius:34px;overflow:hidden;box-shadow:inset 0 0 0 2px #d2d4d8"><div style="position:absolute;left:0px;top:0;width:65px;height:68px;background:#e4e4e6;box-sizing:border-box"></div><div style="position:absolute;left:65px;top:0;width:65px;height:68px;background:#e4e4e6;border-left:1px solid #d9dadd;box-sizing:border-box"></div><div style="position:absolute;left:130px;top:0;width:65px;height:68px;background:#e4e4e6;border-left:1px solid #d9dadd;box-sizing:border-box"></div><div style="position:absolute;left:195px;top:0;width:65px;height:68px;background:#e4e4e6;border-left:1px solid #d9dadd;box-sizing:border-box"></div><div style="position:absolute;left:260px;top:0;width:65px;height:68px;background:#e4e4e6;border-left:1px solid #d9dadd;box-sizing:border-box"></div><div style="position:absolute;left:325px;top:0;width:65px;height:68px;background:#e4e4e6;border-left:1px solid #d9dadd;box-sizing:border-box"></div><div style="position:absolute;left:390px;top:0;width:65px;height:68px;background:#e4e4e6;border-left:1px solid #d9dadd;box-sizing:border-box"></div><div style="position:absolute;left:455px;top:0;width:65px;height:68px;background:#e4e4e6;border-left:1px solid #d9dadd;box-sizing:border-box"></div><div style="position:absolute;inset:0;border-radius:34px;box-shadow:inset 0 0 0 2px #d2d4d8"></div></div><div class="a" style="left:223px;top:1839.6px;width:3765px;height:107.4px;background:#f9fafb"></div><div class="a" style="left:253px;top:1870.1px;width:47px;height:47px;box-sizing:border-box;border:4.7px solid #535a67;border-radius:7px"></div><svg style="position:absolute;left:418.3px;top:1887.6px;width:14px;height:12px" viewBox="0 0 14 12"><polygon points="0,0 14,0 7,12" fill="#ef3b3b"/></svg><div class="a" style="left:588.5px;top:1862.1px;width:59px;height:59px;border-radius:50%;background:#f3f4f6;border:2px solid #e6e8eb"></div><svg style="position:absolute;left:604px;top:1877.6px;width:34px;height:34px" viewBox="0 0 34 34"><circle cx="16.5" cy="7" r="6.5" fill="#8a9099"/><path d="M2 30 C2 21 9 19.5 16.5 19.5 C24 19.5 31 21 31 30 Z" fill="#8a9099"/></svg><div class="a" style="left:777px;top:1883.1px;width:21px;height:21px;border-radius:50%;background:#acd3f4"></div><svg style="position:absolute;left:937px;top:1861.6px;width:243px;height:60px" viewBox="0 0 243 60"><defs><linearGradient id="g9" x1="0" y1="0" x2="0" y2="1"><stop offset="0" stop-color="#c9cff3" stop-opacity="0.75"/><stop offset="1" stop-color="#e6e9fa" stop-opacity="0"/></linearGradient></defs><path d="M0,23.5 C6.7,20.9 26.3,9.9 40,7.8 C53.7,5.7 62.2,11.3 82,10.7 C101.8,10.1 139.0,5.0 159,4.4 C179.0,3.8 188.0,5.3 202,7.3 C216.0,9.3 236.2,14.9 243,16.4 L243,60 L0,60 Z" fill="url(#g9)"/><line x1="0" y1="32" x2="243" y2="32" stroke="#c5c9dc" stroke-width="2" stroke-dasharray="3 8"/><path d="M0,23.5 C6.7,20.9 26.3,9.9 40,7.8 C53.7,5.7 62.2,11.3 82,10.7 C101.8,10.1 139.0,5.0 159,4.4 C179.0,3.8 188.0,5.3 202,7.3 C216.0,9.3 236.2,14.9 243,16.4" fill="none" stroke="#5668e0" stroke-width="3.2"/></svg><div class="a" style="left:2287px;top:1859.6px;width:520px;height:68px;border-radius:34px;overflow:hidden;box-shadow:inset 0 0 0 2px #d2d4d8"><div style="position:absolute;left:0px;top:0;width:65px;height:68px;background:#e3edfd;box-sizing:border-box"></div><div style="position:absolute;left:65px;top:0;width:65px;height:68px;background:#e4e4e6;border-left:1px solid #d9dadd;box-sizing:border-box"></div><div style="position:absolute;left:130px;top:0;width:65px;height:68px;background:#e4e4e6;border-left:1px solid #d9dadd;box-sizing:border-box"></div><div style="position:absolute;left:195px;top:0;width:65px;height:68px;background:#e4e4e6;border-left:1px solid #d9dadd;box-sizing:border-box"></div><div style="position:absolute;left:260px;top:0;width:65px;height:68px;background:#e4e4e6;border-left:1px solid #d9dadd;box-sizing:border-box"></div><div style="position:absolute;left:325px;top:0;width:65px;height:68px;background:#e4e4e6;border-left:1px solid #d9dadd;box-sizing:border-box"></div><div style="position:absolute;left:390px;top:0;width:65px;height:68px;background:#e4e4e6;border-left:1px solid #d9dadd;box-sizing:border-box"></div><div style="position:absolute;left:455px;top:0;width:65px;height:68px;background:#e4e4e6;border-left:1px solid #d9dadd;box-sizing:border-box"></div><div style="position:absolute;inset:0;border-radius:34px;box-shadow:inset 0 0 0 2px #d2d4d8"></div></div><div class="a" style="left:253px;top:1977.5px;width:47px;height:47px;box-sizing:border-box;border:4.7px solid #535a67;border-radius:7px"></div><div class="a" style="left:588.5px;top:1969.5px;width:59px;height:59px;border-radius:50%;background:#f3f4f6;border:2px solid #e6e8eb"></div><svg style="position:absolute;left:604px;top:1985.0px;width:34px;height:34px" viewBox="0 0 34 34"><circle cx="16.5" cy="7" r="6.5" fill="#8a9099"/><path d="M2 30 C2 21 9 19.5 16.5 19.5 C24 19.5 31 21 31 30 Z" fill="#8a9099"/></svg><div class="a" style="left:777px;top:1990.5px;width:21px;height:21px;border-radius:50%;background:#acd3f4"></div><svg style="position:absolute;left:937px;top:1969.0px;width:243px;height:60px" viewBox="0 0 243 60"><defs><linearGradient id="g10" x1="0" y1="0" x2="0" y2="1"><stop offset="0" stop-color="#c9cff3" stop-opacity="0.75"/><stop offset="1" stop-color="#e6e9fa" stop-opacity="0"/></linearGradient></defs><path d="M0,8 C6.7,9.1 20.0,14.6 40,14.3 C60.0,14.0 99.7,5.8 120,6.3 C140.3,6.8 148.3,16.6 162,17.1 C175.7,17.6 188.5,10.1 202,9.1 C215.5,8.1 236.2,11.0 243,11.4 L243,60 L0,60 Z" fill="url(#g10)"/><line x1="0" y1="32" x2="243" y2="32" stroke="#c5c9dc" stroke-width="2" stroke-dasharray="3 8"/><path d="M0,8 C6.7,9.1 20.0,14.6 40,14.3 C60.0,14.0 99.7,5.8 120,6.3 C140.3,6.8 148.3,16.6 162,17.1 C175.7,17.6 188.5,10.1 202,9.1 C215.5,8.1 236.2,11.0 243,11.4" fill="none" stroke="#5668e0" stroke-width="3.2"/></svg><div class="a" style="left:2287px;top:1967.0px;width:520px;height:68px;border-radius:34px;overflow:hidden;box-shadow:inset 0 0 0 2px #d2d4d8"><div style="position:absolute;left:0px;top:0;width:65px;height:68px;background:#e4e4e6;box-sizing:border-box"></div><div style="position:absolute;left:65px;top:0;width:65px;height:68px;background:#e4e4e6;border-left:1px solid #d9dadd;box-sizing:border-box"></div><div style="position:absolute;left:130px;top:0;width:65px;height:68px;background:#e4e4e6;border-left:1px solid #d9dadd;box-sizing:border-box"></div><div style="position:absolute;left:195px;top:0;width:65px;height:68px;background:#e4e4e6;border-left:1px solid #d9dadd;box-sizing:border-box"></div><div style="position:absolute;left:260px;top:0;width:65px;height:68px;background:#e4e4e6;border-left:1px solid #d9dadd;box-sizing:border-box"></div><div style="position:absolute;left:325px;top:0;width:65px;height:68px;background:#e4e4e6;border-left:1px solid #d9dadd;box-sizing:border-box"></div><div style="position:absolute;left:390px;top:0;width:65px;height:68px;background:#e4e4e6;border-left:1px solid #d9dadd;box-sizing:border-box"></div><div style="position:absolute;left:455px;top:0;width:65px;height:68px;background:#e4e4e6;border-left:1px solid #d9dadd;box-sizing:border-box"></div><div style="position:absolute;inset:0;border-radius:34px;box-shadow:inset 0 0 0 2px #d2d4d8"></div></div><div class="a" style="left:223px;top:2054.4px;width:3765px;height:107.4px;background:#f9fafb"></div><div class="a" style="left:253px;top:2084.9px;width:47px;height:47px;box-sizing:border-box;border:4.7px solid #535a67;border-radius:7px"></div><svg style="position:absolute;left:418.3px;top:2103.4px;width:14px;height:12px" viewBox="0 0 14 12"><polygon points="0,12 7,0 14,12" fill="#22a34a"/></svg><div class="a" style="left:588.5px;top:2076.9px;width:59px;height:59px;border-radius:50%;background:#f3f4f6;border:2px solid #e6e8eb"></div><svg style="position:absolute;left:604px;top:2092.4px;width:34px;height:34px" viewBox="0 0 34 34"><circle cx="16.5" cy="7" r="6.5" fill="#8a9099"/><path d="M2 30 C2 21 9 19.5 16.5 19.5 C24 19.5 31 21 31 30 Z" fill="#8a9099"/></svg><div class="a" style="left:777px;top:2097.9px;width:21px;height:21px;border-radius:50%;background:#f4a66e"></div><div class="a" style="left:803px;top:2097.9px;width:21px;height:21px;border-radius:50%;background:#acd3f4"></div><svg style="position:absolute;left:937px;top:2076.4px;width:243px;height:60px" viewBox="0 0 243 60"><defs><linearGradient id="g11" x1="0" y1="0" x2="0" y2="1"><stop offset="0" stop-color="#c9cff3" stop-opacity="0.75"/><stop offset="1" stop-color="#e6e9fa" stop-opacity="0"/></linearGradient></defs><path d="M0,14.4 C9.0,14.5 37.8,16.2 54,15 C70.2,13.8 81.3,8.3 97,7 C112.7,5.7 131.8,5.3 148,7 C164.2,8.7 178.2,16.9 194,17.3 C209.8,17.7 234.8,10.6 243,9.3 L243,60 L0,60 Z" fill="url(#g11)"/><line x1="0" y1="32" x2="243" y2="32" stroke="#c5c9dc" stroke-width="2" stroke-dasharray="3 8"/><path d="M0,14.4 C9.0,14.5 37.8,16.2 54,15 C70.2,13.8 81.3,8.3 97,7 C112.7,5.7 131.8,5.3 148,7 C164.2,8.7 178.2,16.9 194,17.3 C209.8,17.7 234.8,10.6 243,9.3" fill="none" stroke="#5668e0" stroke-width="3.2"/></svg><div class="a" style="left:2287px;top:2074.4px;width:520px;height:68px;border-radius:34px;overflow:hidden;box-shadow:inset 0 0 0 2px #d2d4d8"><div style="position:absolute;left:0px;top:0;width:65px;height:68px;background:#e4e4e6;box-sizing:border-box"></div><div style="position:absolute;left:65px;top:0;width:65px;height:68px;background:#e4e4e6;border-left:1px solid #d9dadd;box-sizing:border-box"></div><div style="position:absolute;left:130px;top:0;width:65px;height:68px;background:#e4e4e6;border-left:1px solid #d9dadd;box-sizing:border-box"></div><div style="position:absolute;left:195px;top:0;width:65px;height:68px;background:#e4e4e6;border-left:1px solid #d9dadd;box-sizing:border-box"></div><div style="position:absolute;left:260px;top:0;width:65px;height:68px;background:#e4e4e6;border-left:1px solid #d9dadd;box-sizing:border-box"></div><div style="position:absolute;left:325px;top:0;width:65px;height:68px;background:#e3edfd;border-left:1px solid #d9dadd;box-sizing:border-box"></div><div style="position:absolute;left:390px;top:0;width:65px;height:68px;background:#e4e4e6;border-left:1px solid #d9dadd;box-sizing:border-box"></div><div style="position:absolute;left:455px;top:0;width:65px;height:68px;background:#e4e4e6;border-left:1px solid #d9dadd;box-sizing:border-box"></div><div style="position:absolute;inset:0;border-radius:34px;box-shadow:inset 0 0 0 2px #d2d4d8"></div></div><div class="a" style="left:253px;top:2192.3px;width:47px;height:47px;box-sizing:border-box;border:4.7px solid #535a67;border-radius:7px"></div><div class="a" style="left:588.5px;top:2184.3px;width:59px;height:59px;border-radius:50%;background:#f3f4f6;border:2px solid #e6e8eb"></div><svg style="position:absolute;left:604px;top:2199.8px;width:34px;height:34px" viewBox="0 0 34 34"><circle cx="16.5" cy="7" r="6.5" fill="#8a9099"/><path d="M2 30 C2 21 9 19.5 16.5 19.5 C24 19.5 31 21 31 30 Z" fill="#8a9099"/></svg><div class="a" style="left:777px;top:2205.3px;width:21px;height:21px;border-radius:50%;background:#acd3f4"></div><svg style="position:absolute;left:937px;top:2183.8px;width:243px;height:60px" viewBox="0 0 243 60"><defs><linearGradient id="g12" x1="0" y1="0" x2="0" y2="1"><stop offset="0" stop-color="#c9cff3" stop-opacity="0.75"/><stop offset="1" stop-color="#e6e9fa" stop-opacity="0"/></linearGradient></defs><path d="M0,10.3 C13.3,11.0 60.0,15.2 80,14.5 C100.0,13.8 106.8,7.0 120,6.1 C133.2,5.2 145.8,7.5 159,8.9 C172.2,10.3 185.0,13.6 199,14.5 C213.0,15.4 235.7,14.5 243,14.5 L243,60 L0,60 Z" fill="url(#g12)"/><line x1="0" y1="32" x2="243" y2="32" stroke="#c5c9dc" stroke-width="2" stroke-dasharray="3 8"/><path d="M0,10.3 C13.3,11.0 60.0,15.2 80,14.5 C100.0,13.8 106.8,7.0 120,6.1 C133.2,5.2 145.8,7.5 159,8.9 C172.2,10.3 185.0,13.6 199,14.5 C213.0,15.4 235.7,14.5 243,14.5" fill="none" stroke="#5668e0" stroke-width="3.2"/></svg><div class="a" style="left:2287px;top:2181.8px;width:520px;height:68px;border-radius:34px;overflow:hidden;box-shadow:inset 0 0 0 2px #d2d4d8"><div style="position:absolute;left:0px;top:0;width:65px;height:68px;background:#e4e4e6;box-sizing:border-box"></div><div style="position:absolute;left:65px;top:0;width:65px;height:68px;background:#e4e4e6;border-left:1px solid #d9dadd;box-sizing:border-box"></div><div style="position:absolute;left:130px;top:0;width:65px;height:68px;background:#e4e4e6;border-left:1px solid #d9dadd;box-sizing:border-box"></div><div style="position:absolute;left:195px;top:0;width:65px;height:68px;background:#e4e4e6;border-left:1px solid #d9dadd;box-sizing:border-box"></div><div style="position:absolute;left:260px;top:0;width:65px;height:68px;background:#e4e4e6;border-left:1px solid #d9dadd;box-sizing:border-box"></div><div style="position:absolute;left:325px;top:0;width:65px;height:68px;background:#e4e4e6;border-left:1px solid #d9dadd;box-sizing:border-box"></div><div style="position:absolute;left:390px;top:0;width:65px;height:68px;background:#e4e4e6;border-left:1px solid #d9dadd;box-sizing:border-box"></div><div style="position:absolute;left:455px;top:0;width:65px;height:68px;background:#e4e4e6;border-left:1px solid #d9dadd;box-sizing:border-box"></div><div style="position:absolute;inset:0;border-radius:34px;box-shadow:inset 0 0 0 2px #d2d4d8"></div></div><div class="a" style="left:223px;top:2269.2px;width:3765px;height:107.4px;background:#f9fafb"></div><div class="a" style="left:253px;top:2299.7px;width:47px;height:47px;box-sizing:border-box;border:4.7px solid #535a67;border-radius:7px"></div><svg style="position:absolute;left:418.3px;top:2318.2px;width:14px;height:12px" viewBox="0 0 14 12"><polygon points="0,12 7,0 14,12" fill="#22a34a"/></svg><div class="a" style="left:588.5px;top:2291.7px;width:59px;height:59px;border-radius:50%;background:#f3f4f6;border:2px solid #e6e8eb"></div><svg style="position:absolute;left:604px;top:2307.2px;width:34px;height:34px" viewBox="0 0 34 34"><circle cx="16.5" cy="7" r="6.5" fill="#8a9099"/><path d="M2 30 C2 21 9 19.5 16.5 19.5 C24 19.5 31 21 31 30 Z" fill="#8a9099"/></svg><svg style="position:absolute;left:937px;top:2291.2px;width:243px;height:60px" viewBox="0 0 243 60"><defs><linearGradient id="g13" x1="0" y1="0" x2="0" y2="1"><stop offset="0" stop-color="#c9cff3" stop-opacity="0.75"/><stop offset="1" stop-color="#e6e9fa" stop-opacity="0"/></linearGradient></defs><path d="M0,6 C6.7,5.5 26.7,2.8 40,3.2 C53.3,3.6 66.5,3.9 80,8.3 C93.5,12.7 107.8,28.2 121,29.6 C134.2,31.0 145.5,20.4 159,16.8 C172.5,13.2 188.0,7.6 202,8.3 C216.0,9.0 236.2,19.0 243,21.1 L243,60 L0,60 Z" fill="url(#g13)"/><line x1="0" y1="32" x2="243" y2="32" stroke="#c5c9dc" stroke-width="2" stroke-dasharray="3 8"/><path d="M0,6 C6.7,5.5 26.7,2.8 40,3.2 C53.3,3.6 66.5,3.9 80,8.3 C93.5,12.7 107.8,28.2 121,29.6 C134.2,31.0 145.5,20.4 159,16.8 C172.5,13.2 188.0,7.6 202,8.3 C216.0,9.0 236.2,19.0 243,21.1" fill="none" stroke="#5668e0" stroke-width="3.2"/></svg><div class="a" style="left:2287px;top:2289.2px;width:520px;height:68px;border-radius:34px;overflow:hidden;box-shadow:inset 0 0 0 2px #d2d4d8"><div style="position:absolute;left:0px;top:0;width:65px;height:68px;background:#e4e4e6;box-sizing:border-box"></div><div style="position:absolute;left:65px;top:0;width:65px;height:68px;background:#e4e4e6;border-left:1px solid #d9dadd;box-sizing:border-box"></div><div style="position:absolute;left:130px;top:0;width:65px;height:68px;background:#e3edfd;border-left:1px solid #d9dadd;box-sizing:border-box"></div><div style="position:absolute;left:195px;top:0;width:65px;height:68px;background:#e3edfd;border-left:1px solid #d9dadd;box-sizing:border-box"></div><div style="position:absolute;left:260px;top:0;width:65px;height:68px;background:#e4e4e6;border-left:1px solid #d9dadd;box-sizing:border-box"></div><div style="position:absolute;left:325px;top:0;width:65px;height:68px;background:#e4e4e6;border-left:1px solid #d9dadd;box-sizing:border-box"></div><div style="position:absolute;left:390px;top:0;width:65px;height:68px;background:#e4e4e6;border-left:1px solid #d9dadd;box-sizing:border-box"></div><div style="position:absolute;left:455px;top:0;width:65px;height:68px;background:#e4e4e6;border-left:1px solid #d9dadd;box-sizing:border-box"></div><div style="position:absolute;inset:0;border-radius:34px;box-shadow:inset 0 0 0 2px #d2d4d8"></div></div><div class="a" style="left:253px;top:2407.1px;width:47px;height:47px;box-sizing:border-box;border:4.7px solid #535a67;border-radius:7px"></div><svg style="position:absolute;left:418.3px;top:2425.6000000000004px;width:14px;height:12px" viewBox="0 0 14 12"><polygon points="0,12 7,0 14,12" fill="#22a34a"/></svg><div class="a" style="left:588.5px;top:2399.1px;width:59px;height:59px;border-radius:50%;background:#f3f4f6;border:2px solid #e6e8eb"></div><svg style="position:absolute;left:604px;top:2414.6000000000004px;width:34px;height:34px" viewBox="0 0 34 34"><circle cx="16.5" cy="7" r="6.5" fill="#8a9099"/><path d="M2 30 C2 21 9 19.5 16.5 19.5 C24 19.5 31 21 31 30 Z" fill="#8a9099"/></svg><div class="a" style="left:777px;top:2420.1px;width:21px;height:21px;border-radius:50%;background:#f4a66e"></div><div class="a" style="left:803px;top:2420.1px;width:21px;height:21px;border-radius:50%;background:#acd3f4"></div><svg style="position:absolute;left:937px;top:2398.6000000000004px;width:243px;height:60px" viewBox="0 0 243 60"><defs><linearGradient id="g14" x1="0" y1="0" x2="0" y2="1"><stop offset="0" stop-color="#c9cff3" stop-opacity="0.75"/><stop offset="1" stop-color="#e6e9fa" stop-opacity="0"/></linearGradient></defs><path d="M0,10.4 C8.0,11.8 31.8,18.6 48,18.9 C64.2,19.2 79.3,13.0 97,12.4 C114.7,11.8 137.5,15.3 154,15.2 C170.5,15.1 181.2,12.0 196,11.8 C210.8,11.6 235.2,13.7 243,14.1 L243,60 L0,60 Z" fill="url(#g14)"/><line x1="0" y1="32" x2="243" y2="32" stroke="#c5c9dc" stroke-width="2" stroke-dasharray="3 8"/><path d="M0,10.4 C8.0,11.8 31.8,18.6 48,18.9 C64.2,19.2 79.3,13.0 97,12.4 C114.7,11.8 137.5,15.3 154,15.2 C170.5,15.1 181.2,12.0 196,11.8 C210.8,11.6 235.2,13.7 243,14.1" fill="none" stroke="#5668e0" stroke-width="3.2"/></svg><div class="a" style="left:2287px;top:2396.6px;width:520px;height:68px;border-radius:34px;overflow:hidden;box-shadow:inset 0 0 0 2px #d2d4d8"><div style="position:absolute;left:0px;top:0;width:65px;height:68px;background:#e4e4e6;box-sizing:border-box"></div><div style="position:absolute;left:65px;top:0;width:65px;height:68px;background:#e4e4e6;border-left:1px solid #d9dadd;box-sizing:border-box"></div><div style="position:absolute;left:130px;top:0;width:65px;height:68px;background:#e4e4e6;border-left:1px solid #d9dadd;box-sizing:border-box"></div><div style="position:absolute;left:195px;top:0;width:65px;height:68px;background:#e4e4e6;border-left:1px solid #d9dadd;box-sizing:border-box"></div><div style="position:absolute;left:260px;top:0;width:65px;height:68px;background:#e4e4e6;border-left:1px solid #d9dadd;box-sizing:border-box"></div><div style="position:absolute;left:325px;top:0;width:65px;height:68px;background:#e4e4e6;border-left:1px solid #d9dadd;box-sizing:border-box"></div><div style="position:absolute;left:390px;top:0;width:65px;height:68px;background:#e4e4e6;border-left:1px solid #d9dadd;box-sizing:border-box"></div><div style="position:absolute;left:455px;top:0;width:65px;height:68px;background:#dde2f8;border-left:1px solid #d9dadd;box-sizing:border-box"></div><div style="position:absolute;inset:0;border-radius:34px;box-shadow:inset 0 0 0 2px #d2d4d8"></div></div><div class="a" style="left:223px;top:2484.0px;width:3765px;height:107.4px;background:#f9fafb"></div><div class="a" style="left:253px;top:2514.5px;width:47px;height:47px;box-sizing:border-box;border:4.7px solid #535a67;border-radius:7px"></div><div class="a" style="left:588.5px;top:2506.5px;width:59px;height:59px;border-radius:50%;background:#f3f4f6;border:2px solid #e6e8eb"></div><svg style="position:absolute;left:604px;top:2522.0px;width:34px;height:34px" viewBox="0 0 34 34"><circle cx="16.5" cy="7" r="6.5" fill="#8a9099"/><path d="M2 30 C2 21 9 19.5 16.5 19.5 C24 19.5 31 21 31 30 Z" fill="#8a9099"/></svg><div class="a" style="left:777px;top:2527.5px;width:21px;height:21px;border-radius:50%;background:#acd3f4"></div><svg style="position:absolute;left:937px;top:2506.0px;width:243px;height:60px" viewBox="0 0 243 60"><defs><linearGradient id="g15" x1="0" y1="0" x2="0" y2="1"><stop offset="0" stop-color="#c9cff3" stop-opacity="0.75"/><stop offset="1" stop-color="#e6e9fa" stop-opacity="0"/></linearGradient></defs><path d="M0,9.7 C6.7,11.4 20.0,19.2 40,19.7 C60.0,20.2 93.0,14.3 120,12.6 C147.0,10.8 181.5,8.5 202,9.2 C222.5,9.9 236.2,15.5 243,16.8 L243,60 L0,60 Z" fill="url(#g15)"/><line x1="0" y1="32" x2="243" y2="32" stroke="#c5c9dc" stroke-width="2" stroke-dasharray="3 8"/><path d="M0,9.7 C6.7,11.4 20.0,19.2 40,19.7 C60.0,20.2 93.0,14.3 120,12.6 C147.0,10.8 181.5,8.5 202,9.2 C222.5,9.9 236.2,15.5 243,16.8" fill="none" stroke="#5668e0" stroke-width="3.2"/></svg><div class="a" style="left:2287px;top:2504.0px;width:520px;height:68px;border-radius:34px;overflow:hidden;box-shadow:inset 0 0 0 2px #d2d4d8"><div style="position:absolute;left:0px;top:0;width:65px;height:68px;background:#e4e4e6;box-sizing:border-box"></div><div style="position:absolute;left:65px;top:0;width:65px;height:68px;background:#e4e4e6;border-left:1px solid #d9dadd;box-sizing:border-box"></div><div style="position:absolute;left:130px;top:0;width:65px;height:68px;background:#e4e4e6;border-left:1px solid #d9dadd;box-sizing:border-box"></div><div style="position:absolute;left:195px;top:0;width:65px;height:68px;background:#e4e4e6;border-left:1px solid #d9dadd;box-sizing:border-box"></div><div style="position:absolute;left:260px;top:0;width:65px;height:68px;background:#e4e4e6;border-left:1px solid #d9dadd;box-sizing:border-box"></div><div style="position:absolute;left:325px;top:0;width:65px;height:68px;background:#e4e4e6;border-left:1px solid #d9dadd;box-sizing:border-box"></div><div style="position:absolute;left:390px;top:0;width:65px;height:68px;background:#e4e4e6;border-left:1px solid #d9dadd;box-sizing:border-box"></div><div style="position:absolute;left:455px;top:0;width:65px;height:68px;background:#e4e4e6;border-left:1px solid #d9dadd;box-sizing:border-box"></div><div style="position:absolute;inset:0;border-radius:34px;box-shadow:inset 0 0 0 2px #d2d4d8"></div></div><div class="a" style="left:3977px;top:871px;width:10px;height:587px;background:#c8cbd0"></div><div class="a" style="left:3980px;top:2550px;width:200px;height:200px;border-radius:42px;border:2px solid #e6e8eb;background:#fff"></div><svg style="position:absolute;left:4004px;top:2575px;width:44px;height:42px" viewBox="0 0 44 42"><defs><linearGradient id="rb" x1="0" y1="0" x2="1" y2="1"><stop offset="0" stop-color="#f02a4a"/><stop offset="1" stop-color="#f07a70"/></linearGradient></defs><path d="M6 4 C14 -1 32 0 40 10 C44 16 36 28 24 38 C20 42 16 40 12 34 C4 24 -2 10 6 4 Z" fill="url(#rb)"/></svg><div class="t" style="left:47.2px;top:530.1px;font-size:31.91px;color:#1f2533;font-weight:400;transform:scaleX(0.8038);-webkit-text-stroke:0.6px #1f2533;">강의</div><div class="t" style="left:47.5px;top:704.1px;font-size:31.56px;color:#4b5059;font-weight:400;transform:scaleX(0.8038);-webkit-text-stroke:0.6px #4b5059;">학생</div><div class="t" style="left:35.5px;top:879.1px;font-size:31.56px;color:#4b5059;font-weight:400;transform:scaleX(0.8025);-webkit-text-stroke:0.6px #4b5059;">클리닉</div><div class="t" style="left:48.4px;top:1055.4px;font-size:29.33px;color:#4b5059;font-weight:400;transform:scaleX(0.7978);-webkit-text-stroke:0.6px #4b5059;">상담</div><div class="t" style="left:49.7px;top:1219.5px;font-size:28.22px;color:#4b5059;font-weight:400;transform:scaleX(0.8241);-webkit-text-stroke:0.6px #4b5059;">공지</div><div class="t" style="left:37.9px;top:1384.3px;font-size:29.66px;color:#4b5059;font-weight:400;transform:scaleX(0.8023);-webkit-text-stroke:0.6px #4b5059;">메시지</div><div class="t" style="left:26.3px;top:1550.4px;font-size:29.33px;color:#4b5059;font-weight:400;transform:scaleX(0.7747);-webkit-text-stroke:0.6px #4b5059;">질의응답</div><div class="t" style="left:37.7px;top:1716.4px;font-size:28.54px;color:#4b5059;font-weight:400;transform:scaleX(0.8236);-webkit-text-stroke:0.6px #4b5059;">관리자</div><div class="t" style="left:38.4px;top:1935.5px;font-size:28.22px;color:#4b5059;font-weight:400;transform:scaleX(0.8343);-webkit-text-stroke:0.6px #4b5059;">시스템</div><div class="t" style="left:99.8px;top:781.9px;font-size:28.29px;color:#fff;font-weight:700;">5</div><div class="t" style="left:261.3px;top:89.5px;font-size:38.49px;color:#fff;font-weight:700;transform:scaleX(0.8250);-webkit-text-stroke:1.2px #fff;">대치</div><div class="t" style="left:374.0px;top:76.2px;font-size:66.17px;color:#262d3a;font-weight:700;transform:scaleX(0.8951);-webkit-text-stroke:1.6px #262d3a;">대치고 1학년 A반</div><div class="t" style="left:291.2px;top:290.9px;font-size:55.16px;color:#232a36;font-weight:700;transform:scaleX(0.9739);-webkit-text-stroke:1.6px #232a36;">8차시</div><div class="t" style="left:289.9px;top:377.8px;font-size:39.72px;color:#585e68;font-weight:400;transform:scaleX(0.9464);">2026-02-22</div><div class="t" style="left:678.2px;top:290.9px;font-size:55.16px;color:#232a36;font-weight:700;transform:scaleX(0.9739);-webkit-text-stroke:1.6px #232a36;">7차시</div><div class="t" style="left:676.9px;top:377.8px;font-size:39.72px;color:#585e68;font-weight:400;transform:scaleX(0.9464);">2026-02-15</div><div class="t" style="left:1065.2px;top:290.9px;font-size:55.16px;color:#232a36;font-weight:700;transform:scaleX(0.9739);-webkit-text-stroke:1.6px #232a36;">6차시</div><div class="t" style="left:1063.9px;top:377.8px;font-size:39.72px;color:#585e68;font-weight:400;transform:scaleX(0.9464);">2026-02-08</div><div class="t" style="left:1452.2px;top:290.9px;font-size:55.16px;color:#232a36;font-weight:700;transform:scaleX(0.9739);-webkit-text-stroke:1.6px #232a36;">5차시</div><div class="t" style="left:1450.9px;top:377.8px;font-size:39.72px;color:#585e68;font-weight:400;transform:scaleX(0.9464);">2026-02-01</div><div class="t" style="left:1839.2px;top:290.9px;font-size:55.16px;color:#232a36;font-weight:700;transform:scaleX(0.9739);-webkit-text-stroke:1.6px #232a36;">4차시</div><div class="t" style="left:1837.9px;top:377.8px;font-size:39.72px;color:#585e68;font-weight:400;transform:scaleX(0.9464);">2026-01-25</div><div class="t" style="left:2226.2px;top:290.9px;font-size:55.16px;color:#232a36;font-weight:700;transform:scaleX(0.9739);-webkit-text-stroke:1.6px #232a36;">3차시</div><div class="t" style="left:2224.9px;top:377.8px;font-size:39.72px;color:#585e68;font-weight:400;transform:scaleX(0.9464);">2026-01-18</div><div class="t" style="left:2613.2px;top:290.9px;font-size:55.16px;color:#232a36;font-weight:700;transform:scaleX(0.9739);-webkit-text-stroke:1.6px #232a36;">2차시</div><div class="t" style="left:2611.9px;top:377.8px;font-size:39.72px;color:#585e68;font-weight:400;transform:scaleX(0.9464);">2026-01-11</div><div class="t" style="left:3000.2px;top:290.9px;font-size:55.16px;color:#232a36;font-weight:700;transform:scaleX(0.9739);-webkit-text-stroke:1.6px #232a36;">1차시</div><div class="t" style="left:2998.9px;top:377.8px;font-size:39.72px;color:#585e68;font-weight:400;transform:scaleX(0.9464);">2026-01-04</div><div class="t" style="left:359.4px;top:205.2px;font-size:27.47px;color:#2f6fe4;font-weight:700;transform:scaleX(0.9472);-webkit-text-stroke:0.8px #2f6fe4;">5일 전</div><div class="t" style="left:3473.0px;top:323.5px;font-size:37.64px;color:#3f4550;font-weight:400;transform:scaleX(0.7903);-webkit-text-stroke:0.5px #3f4550;">새 차시 추가</div><div class="t" style="left:328.8px;top:550.3px;font-size:40.43px;color:#232a36;font-weight:700;transform:scaleX(0.8517);-webkit-text-stroke:1.0px #232a36;">수강생 목록</div><div class="t" style="left:553.2px;top:559.7px;font-size:27.08px;color:#232a36;font-weight:400;transform:scaleX(1.1944);-webkit-text-stroke:0.9px #232a36;">56명</div><div class="t" style="left:786.4px;top:548.8px;font-size:44.38px;color:#535a66;font-weight:400;transform:scaleX(0.7888);-webkit-text-stroke:0.5px #535a66;">강의 자료실</div><div class="t" style="left:1012.4px;top:561.1px;font-size:29.21px;color:#3a414c;font-weight:400;transform:scaleX(1.0744);">6개</div><div class="t" style="left:1227.5px;top:550.9px;font-size:43.26px;color:#535a66;font-weight:400;transform:scaleX(0.8011);-webkit-text-stroke:0.5px #535a66;">강의 게시판</div><div class="t" style="left:1549.1px;top:550.9px;font-size:43.26px;color:#535a66;font-weight:400;transform:scaleX(0.8004);-webkit-text-stroke:0.5px #535a66;">디데이 설정</div><div class="t" style="left:3897.6px;top:562.4px;font-size:32.98px;color:#3f4550;font-weight:700;transform:scaleX(0.8597);">확장</div><div class="t" style="left:318.6px;top:688.4px;font-size:32.26px;color:#3a4a66;font-weight:700;transform:scaleX(0.8906);">필터</div><div class="t" style="left:513.6px;top:685.4px;font-size:36.46px;color:#a3a8b0;font-weight:400;transform:scaleX(0.8376);">검색어 입력 (초성 검색 가능)</div><div class="t" style="left:3770.0px;top:686.4px;font-size:32.98px;color:#2b313b;font-weight:700;transform:scaleX(0.8610);">일괄 학생 추가</div><div class="t" style="left:339.3px;top:803.0px;font-size:35.58px;color:#70767f;font-weight:400;transform:scaleX(0.8326);">등수</div><div class="t" style="left:554.0px;top:804.2px;font-size:34.00px;color:#70767f;font-weight:400;transform:scaleX(0.8679);">이름</div><div class="t" style="left:930.5px;top:804.2px;font-size:34.00px;color:#70767f;font-weight:400;transform:scaleX(0.8578);">성적 추이</div><div class="t" style="left:1253.0px;top:804.2px;font-size:34.00px;color:#70767f;font-weight:400;transform:scaleX(0.8362);">학부모 전화번호</div><div class="t" style="left:1630.0px;top:804.2px;font-size:34.00px;color:#70767f;font-weight:400;transform:scaleX(0.8383);">학생 전화번호</div><div class="t" style="left:2006.0px;top:804.2px;font-size:34.00px;color:#70767f;font-weight:400;transform:scaleX(0.8534);">고등학교</div><div class="t" style="left:2273.9px;top:805.3px;font-size:33.70px;color:#70767f;font-weight:400;transform:scaleX(0.8699);">출결 이력</div><div class="t" style="left:510.1px;top:904.0px;font-size:43.48px;color:#232a36;font-weight:400;">1</div><div class="t" style="left:667.9px;top:909.9px;font-size:35.05px;color:#30353d;font-weight:700;transform:scaleX(0.8945);-webkit-text-stroke:0.4px #30353d;">홍길동</div><div class="t" style="left:1254.4px;top:904.7px;font-size:42.25px;color:#3d424a;font-weight:400;transform:scaleX(0.9573);">010-1234-5678</div><div class="t" style="left:1630.4px;top:904.7px;font-size:42.25px;color:#3d424a;font-weight:400;transform:scaleX(0.9573);">010-1234-5678</div><div class="t" style="left:2006.5px;top:904.7px;font-size:38.33px;color:#3a3f47;font-weight:400;transform:scaleX(0.7986);">대치고등학교</div><div class="t" style="left:2307.8px;top:912.8px;font-size:27.47px;color:#2a2d32;font-weight:700;transform:scaleX(0.9000);">현</div><div class="t" style="left:2372.8px;top:912.8px;font-size:27.47px;color:#2a2d32;font-weight:700;transform:scaleX(0.9000);">현</div><div class="t" style="left:2437.9px;top:912.8px;font-size:27.47px;color:#2f7cf2;font-weight:700;transform:scaleX(0.9000);">영</div><div class="t" style="left:2502.8px;top:912.8px;font-size:27.47px;color:#2a2d32;font-weight:700;transform:scaleX(0.9000);">현</div><div class="t" style="left:2567.8px;top:912.8px;font-size:27.47px;color:#2a2d32;font-weight:700;transform:scaleX(0.9000);">현</div><div class="t" style="left:2632.9px;top:912.8px;font-size:27.47px;color:#2f7cf2;font-weight:700;transform:scaleX(0.9000);">영</div><div class="t" style="left:2697.9px;top:912.8px;font-size:27.47px;color:#2f7cf2;font-weight:700;transform:scaleX(0.9000);">영</div><div class="t" style="left:2762.9px;top:912.8px;font-size:27.47px;color:#2f7cf2;font-weight:700;transform:scaleX(0.9000);">영</div><div class="t" style="left:510.1px;top:1011.4px;font-size:43.48px;color:#232a36;font-weight:400;">2</div><div class="t" style="left:667.9px;top:1017.3px;font-size:35.05px;color:#30353d;font-weight:700;transform:scaleX(0.8945);-webkit-text-stroke:0.4px #30353d;">홍길동</div><div class="t" style="left:1254.4px;top:1012.1px;font-size:42.25px;color:#3d424a;font-weight:400;transform:scaleX(0.9573);">010-1234-5678</div><div class="t" style="left:1630.4px;top:1012.1px;font-size:42.25px;color:#3d424a;font-weight:400;transform:scaleX(0.9573);">010-1234-5678</div><div class="t" style="left:2006.5px;top:1012.1px;font-size:38.33px;color:#3a3f47;font-weight:400;transform:scaleX(0.7986);">대치고등학교</div><div class="t" style="left:2307.8px;top:1020.2px;font-size:27.47px;color:#2a2d32;font-weight:700;transform:scaleX(0.9000);">현</div><div class="t" style="left:2372.8px;top:1020.2px;font-size:27.47px;color:#2a2d32;font-weight:700;transform:scaleX(0.9000);">현</div><div class="t" style="left:2437.8px;top:1020.2px;font-size:27.47px;color:#2a2d32;font-weight:700;transform:scaleX(0.9000);">현</div><div class="t" style="left:2502.8px;top:1020.2px;font-size:27.47px;color:#2a2d32;font-weight:700;transform:scaleX(0.9000);">현</div><div class="t" style="left:2567.8px;top:1020.2px;font-size:27.47px;color:#2a2d32;font-weight:700;transform:scaleX(0.9000);">현</div><div class="t" style="left:2632.8px;top:1020.2px;font-size:27.47px;color:#2a2d32;font-weight:700;transform:scaleX(0.9000);">현</div><div class="t" style="left:2697.8px;top:1020.2px;font-size:27.47px;color:#2a2d32;font-weight:700;transform:scaleX(0.9000);">현</div><div class="t" style="left:2763.5px;top:1020.2px;font-size:27.47px;color:#1f3fcf;font-weight:700;transform:scaleX(0.9000);">지</div><div class="t" style="left:510.1px;top:1118.8px;font-size:43.48px;color:#232a36;font-weight:400;">3</div><div class="t" style="left:461.6px;top:1126.3px;font-size:30.00px;color:#22a34a;font-weight:400;">4</div><div class="t" style="left:667.9px;top:1124.7px;font-size:35.05px;color:#30353d;font-weight:700;transform:scaleX(0.8945);-webkit-text-stroke:0.4px #30353d;">홍길동</div><div class="t" style="left:1254.4px;top:1119.5px;font-size:42.25px;color:#3d424a;font-weight:400;transform:scaleX(0.9573);">010-1234-5678</div><div class="t" style="left:1630.4px;top:1119.5px;font-size:42.25px;color:#3d424a;font-weight:400;transform:scaleX(0.9573);">010-1234-5678</div><div class="t" style="left:2006.5px;top:1119.5px;font-size:38.33px;color:#3a3f47;font-weight:400;transform:scaleX(0.7986);">대치고등학교</div><div class="t" style="left:2307.8px;top:1127.6px;font-size:27.47px;color:#2a2d32;font-weight:700;transform:scaleX(0.9000);">현</div><div class="t" style="left:2372.8px;top:1127.6px;font-size:27.47px;color:#2a2d32;font-weight:700;transform:scaleX(0.9000);">현</div><div class="t" style="left:2437.8px;top:1127.6px;font-size:27.47px;color:#2a2d32;font-weight:700;transform:scaleX(0.9000);">현</div><div class="t" style="left:2502.8px;top:1127.6px;font-size:27.47px;color:#2a2d32;font-weight:700;transform:scaleX(0.9000);">현</div><div class="t" style="left:2567.6px;top:1127.6px;font-size:27.47px;color:#f03a3a;font-weight:700;transform:scaleX(0.9000);">결</div><div class="t" style="left:2632.6px;top:1127.6px;font-size:27.47px;color:#f03a3a;font-weight:700;transform:scaleX(0.9000);">결</div><div class="t" style="left:2697.8px;top:1127.6px;font-size:27.47px;color:#2a2d32;font-weight:700;transform:scaleX(0.9000);">현</div><div class="t" style="left:2762.8px;top:1127.6px;font-size:27.47px;color:#2a2d32;font-weight:700;transform:scaleX(0.9000);">현</div><div class="t" style="left:509.3px;top:1226.2px;font-size:43.48px;color:#232a36;font-weight:400;">4</div><div class="t" style="left:462.2px;top:1233.7px;font-size:30.00px;color:#ef3b3b;font-weight:400;">1</div><div class="t" style="left:667.9px;top:1232.1px;font-size:35.05px;color:#30353d;font-weight:700;transform:scaleX(0.8945);-webkit-text-stroke:0.4px #30353d;">홍길동</div><div class="t" style="left:1254.4px;top:1226.9px;font-size:42.25px;color:#3d424a;font-weight:400;transform:scaleX(0.9573);">010-1234-5678</div><div class="t" style="left:1630.4px;top:1226.9px;font-size:42.25px;color:#3d424a;font-weight:400;transform:scaleX(0.9573);">010-1234-5678</div><div class="t" style="left:2006.5px;top:1226.9px;font-size:38.33px;color:#3a3f47;font-weight:400;transform:scaleX(0.7986);">대치고등학교</div><div class="t" style="left:2307.8px;top:1235.0px;font-size:27.47px;color:#2a2d32;font-weight:700;transform:scaleX(0.9000);">현</div><div class="t" style="left:2372.8px;top:1235.0px;font-size:27.47px;color:#2a2d32;font-weight:700;transform:scaleX(0.9000);">현</div><div class="t" style="left:2437.8px;top:1235.0px;font-size:27.47px;color:#2a2d32;font-weight:700;transform:scaleX(0.9000);">현</div><div class="t" style="left:2502.8px;top:1235.0px;font-size:27.47px;color:#2a2d32;font-weight:700;transform:scaleX(0.9000);">현</div><div class="t" style="left:2567.8px;top:1235.0px;font-size:27.47px;color:#2a2d32;font-weight:700;transform:scaleX(0.9000);">현</div><div class="t" style="left:2632.8px;top:1235.0px;font-size:27.47px;color:#2a2d32;font-weight:700;transform:scaleX(0.9000);">현</div><div class="t" style="left:2697.8px;top:1235.0px;font-size:27.47px;color:#2a2d32;font-weight:700;transform:scaleX(0.9000);">현</div><div class="t" style="left:2762.8px;top:1235.0px;font-size:27.47px;color:#2a2d32;font-weight:700;transform:scaleX(0.9000);">현</div><div class="t" style="left:510.1px;top:1333.6px;font-size:43.48px;color:#232a36;font-weight:400;">6</div><div class="t" style="left:462.2px;top:1341.1px;font-size:30.00px;color:#ef3b3b;font-weight:400;">2</div><div class="t" style="left:667.9px;top:1339.5px;font-size:35.05px;color:#30353d;font-weight:700;transform:scaleX(0.8945);-webkit-text-stroke:0.4px #30353d;">홍길동</div><div class="t" style="left:1254.4px;top:1334.3px;font-size:42.25px;color:#3d424a;font-weight:400;transform:scaleX(0.9573);">010-1234-5678</div><div class="t" style="left:1630.4px;top:1334.3px;font-size:42.25px;color:#3d424a;font-weight:400;transform:scaleX(0.9573);">010-1234-5678</div><div class="t" style="left:2006.5px;top:1334.3px;font-size:38.33px;color:#3a3f47;font-weight:400;transform:scaleX(0.7986);">대치고등학교</div><div class="t" style="left:2307.8px;top:1342.4px;font-size:27.47px;color:#2a2d32;font-weight:700;transform:scaleX(0.9000);">현</div><div class="t" style="left:2372.8px;top:1342.4px;font-size:27.47px;color:#2a2d32;font-weight:700;transform:scaleX(0.9000);">현</div><div class="t" style="left:2437.8px;top:1342.4px;font-size:27.47px;color:#2a2d32;font-weight:700;transform:scaleX(0.9000);">현</div><div class="t" style="left:2502.8px;top:1342.4px;font-size:27.47px;color:#2a2d32;font-weight:700;transform:scaleX(0.9000);">현</div><div class="t" style="left:2567.8px;top:1342.4px;font-size:27.47px;color:#2a2d32;font-weight:700;transform:scaleX(0.9000);">현</div><div class="t" style="left:2632.8px;top:1342.4px;font-size:27.47px;color:#2a2d32;font-weight:700;transform:scaleX(0.9000);">현</div><div class="t" style="left:2697.8px;top:1342.4px;font-size:27.47px;color:#2a2d32;font-weight:700;transform:scaleX(0.9000);">현</div><div class="t" style="left:2762.8px;top:1342.4px;font-size:27.47px;color:#2a2d32;font-weight:700;transform:scaleX(0.9000);">현</div><div class="t" style="left:510.1px;top:1441.0px;font-size:43.48px;color:#232a36;font-weight:400;">7</div><div class="t" style="left:462.2px;top:1448.5px;font-size:30.00px;color:#ef3b3b;font-weight:400;">1</div><div class="t" style="left:667.9px;top:1446.9px;font-size:35.05px;color:#30353d;font-weight:700;transform:scaleX(0.8945);-webkit-text-stroke:0.4px #30353d;">홍길동</div><div class="t" style="left:1254.4px;top:1441.7px;font-size:42.25px;color:#3d424a;font-weight:400;transform:scaleX(0.9573);">010-1234-5678</div><div class="t" style="left:1630.4px;top:1441.7px;font-size:42.25px;color:#3d424a;font-weight:400;transform:scaleX(0.9573);">010-1234-5678</div><div class="t" style="left:2006.5px;top:1441.7px;font-size:38.33px;color:#3a3f47;font-weight:400;transform:scaleX(0.7986);">대치고등학교</div><div class="t" style="left:2307.8px;top:1449.8px;font-size:27.47px;color:#2a2d32;font-weight:700;transform:scaleX(0.9000);">현</div><div class="t" style="left:2372.8px;top:1449.8px;font-size:27.47px;color:#2a2d32;font-weight:700;transform:scaleX(0.9000);">현</div><div class="t" style="left:2437.8px;top:1449.8px;font-size:27.47px;color:#2a2d32;font-weight:700;transform:scaleX(0.9000);">현</div><div class="t" style="left:2502.8px;top:1449.8px;font-size:27.47px;color:#2a2d32;font-weight:700;transform:scaleX(0.9000);">현</div><div class="t" style="left:2567.8px;top:1449.8px;font-size:27.47px;color:#2a2d32;font-weight:700;transform:scaleX(0.9000);">현</div><div class="t" style="left:2632.8px;top:1449.8px;font-size:27.47px;color:#2a2d32;font-weight:700;transform:scaleX(0.9000);">현</div><div class="t" style="left:2697.8px;top:1449.8px;font-size:27.47px;color:#2a2d32;font-weight:700;transform:scaleX(0.9000);">현</div><div class="t" style="left:2762.8px;top:1449.8px;font-size:27.47px;color:#2a2d32;font-weight:700;transform:scaleX(0.9000);">현</div><div class="t" style="left:510.1px;top:1548.4px;font-size:43.48px;color:#232a36;font-weight:400;">8</div><div class="t" style="left:462.2px;top:1555.9px;font-size:30.00px;color:#22a34a;font-weight:400;">3</div><div class="t" style="left:667.9px;top:1554.3px;font-size:35.05px;color:#30353d;font-weight:700;transform:scaleX(0.8945);-webkit-text-stroke:0.4px #30353d;">홍길동</div><div class="t" style="left:1254.4px;top:1549.1px;font-size:42.25px;color:#3d424a;font-weight:400;transform:scaleX(0.9573);">010-1234-5678</div><div class="t" style="left:1630.4px;top:1549.1px;font-size:42.25px;color:#3d424a;font-weight:400;transform:scaleX(0.9573);">010-1234-5678</div><div class="t" style="left:2006.5px;top:1549.1px;font-size:38.33px;color:#3a3f47;font-weight:400;transform:scaleX(0.7986);">대치고등학교</div><div class="t" style="left:2307.8px;top:1557.2px;font-size:27.47px;color:#2a2d32;font-weight:700;transform:scaleX(0.9000);">현</div><div class="t" style="left:2372.8px;top:1557.2px;font-size:27.47px;color:#2a2d32;font-weight:700;transform:scaleX(0.9000);">현</div><div class="t" style="left:2437.9px;top:1557.2px;font-size:27.47px;color:#2f7cf2;font-weight:700;transform:scaleX(0.9000);">영</div><div class="t" style="left:2502.8px;top:1557.2px;font-size:27.47px;color:#2a2d32;font-weight:700;transform:scaleX(0.9000);">현</div><div class="t" style="left:2567.8px;top:1557.2px;font-size:27.47px;color:#2a2d32;font-weight:700;transform:scaleX(0.9000);">현</div><div class="t" style="left:2632.8px;top:1557.2px;font-size:27.47px;color:#2a2d32;font-weight:700;transform:scaleX(0.9000);">현</div><div class="t" style="left:2697.8px;top:1557.2px;font-size:27.47px;color:#2a2d32;font-weight:700;transform:scaleX(0.9000);">현</div><div class="t" style="left:2762.8px;top:1557.2px;font-size:27.47px;color:#2a2d32;font-weight:700;transform:scaleX(0.9000);">현</div><div class="t" style="left:510.1px;top:1655.8px;font-size:43.48px;color:#232a36;font-weight:400;">9</div><div class="t" style="left:667.9px;top:1661.7px;font-size:35.05px;color:#30353d;font-weight:700;transform:scaleX(0.8945);-webkit-text-stroke:0.4px #30353d;">홍길동</div><div class="t" style="left:1254.4px;top:1656.5px;font-size:42.25px;color:#3d424a;font-weight:400;transform:scaleX(0.9573);">010-1234-5678</div><div class="t" style="left:1630.4px;top:1656.5px;font-size:42.25px;color:#3d424a;font-weight:400;transform:scaleX(0.9573);">010-1234-5678</div><div class="t" style="left:2006.5px;top:1656.5px;font-size:38.33px;color:#3a3f47;font-weight:400;transform:scaleX(0.7986);">대치고등학교</div><div class="t" style="left:2307.8px;top:1664.6px;font-size:27.47px;color:#2a2d32;font-weight:700;transform:scaleX(0.9000);">현</div><div class="t" style="left:2372.8px;top:1664.6px;font-size:27.47px;color:#2a2d32;font-weight:700;transform:scaleX(0.9000);">현</div><div class="t" style="left:2437.8px;top:1664.6px;font-size:27.47px;color:#2a2d32;font-weight:700;transform:scaleX(0.9000);">현</div><div class="t" style="left:2502.8px;top:1664.6px;font-size:27.47px;color:#2a2d32;font-weight:700;transform:scaleX(0.9000);">현</div><div class="t" style="left:2567.8px;top:1664.6px;font-size:27.47px;color:#2a2d32;font-weight:700;transform:scaleX(0.9000);">현</div><div class="t" style="left:2632.8px;top:1664.6px;font-size:27.47px;color:#2a2d32;font-weight:700;transform:scaleX(0.9000);">현</div><div class="t" style="left:2697.8px;top:1664.6px;font-size:27.47px;color:#2a2d32;font-weight:700;transform:scaleX(0.9000);">현</div><div class="t" style="left:2762.8px;top:1664.6px;font-size:27.47px;color:#2a2d32;font-weight:700;transform:scaleX(0.9000);">현</div><div class="t" style="left:485.8px;top:1763.2px;font-size:43.48px;color:#232a36;font-weight:400;">10</div><div class="t" style="left:667.9px;top:1769.1px;font-size:35.05px;color:#30353d;font-weight:700;transform:scaleX(0.8945);-webkit-text-stroke:0.4px #30353d;">홍길동</div><div class="t" style="left:1254.4px;top:1763.9px;font-size:42.25px;color:#3d424a;font-weight:400;transform:scaleX(0.9573);">010-1234-5678</div><div class="t" style="left:1630.4px;top:1763.9px;font-size:42.25px;color:#3d424a;font-weight:400;transform:scaleX(0.9573);">010-1234-5678</div><div class="t" style="left:2006.5px;top:1763.9px;font-size:38.33px;color:#3a3f47;font-weight:400;transform:scaleX(0.7986);">대치고등학교</div><div class="t" style="left:2307.8px;top:1772.0px;font-size:27.47px;color:#2a2d32;font-weight:700;transform:scaleX(0.9000);">현</div><div class="t" style="left:2372.8px;top:1772.0px;font-size:27.47px;color:#2a2d32;font-weight:700;transform:scaleX(0.9000);">현</div><div class="t" style="left:2437.8px;top:1772.0px;font-size:27.47px;color:#2a2d32;font-weight:700;transform:scaleX(0.9000);">현</div><div class="t" style="left:2502.8px;top:1772.0px;font-size:27.47px;color:#2a2d32;font-weight:700;transform:scaleX(0.9000);">현</div><div class="t" style="left:2567.8px;top:1772.0px;font-size:27.47px;color:#2a2d32;font-weight:700;transform:scaleX(0.9000);">현</div><div class="t" style="left:2632.8px;top:1772.0px;font-size:27.47px;color:#2a2d32;font-weight:700;transform:scaleX(0.9000);">현</div><div class="t" style="left:2697.8px;top:1772.0px;font-size:27.47px;color:#2a2d32;font-weight:700;transform:scaleX(0.9000);">현</div><div class="t" style="left:2762.8px;top:1772.0px;font-size:27.47px;color:#2a2d32;font-weight:700;transform:scaleX(0.9000);">현</div><div class="t" style="left:489.3px;top:1870.6px;font-size:43.48px;color:#232a36;font-weight:400;">11</div><div class="t" style="left:438.7px;top:1878.1px;font-size:30.00px;color:#ef3b3b;font-weight:400;">3</div><div class="t" style="left:667.9px;top:1876.5px;font-size:35.05px;color:#30353d;font-weight:700;transform:scaleX(0.8945);-webkit-text-stroke:0.4px #30353d;">홍길동</div><div class="t" style="left:1254.4px;top:1871.3px;font-size:42.25px;color:#3d424a;font-weight:400;transform:scaleX(0.9573);">010-1234-5678</div><div class="t" style="left:1630.4px;top:1871.3px;font-size:42.25px;color:#3d424a;font-weight:400;transform:scaleX(0.9573);">010-1234-5678</div><div class="t" style="left:2006.5px;top:1871.3px;font-size:38.33px;color:#3a3f47;font-weight:400;transform:scaleX(0.7986);">대치고등학교</div><div class="t" style="left:2307.9px;top:1879.4px;font-size:27.47px;color:#2f7cf2;font-weight:700;transform:scaleX(0.9000);">영</div><div class="t" style="left:2372.8px;top:1879.4px;font-size:27.47px;color:#2a2d32;font-weight:700;transform:scaleX(0.9000);">현</div><div class="t" style="left:2437.8px;top:1879.4px;font-size:27.47px;color:#2a2d32;font-weight:700;transform:scaleX(0.9000);">현</div><div class="t" style="left:2502.8px;top:1879.4px;font-size:27.47px;color:#2a2d32;font-weight:700;transform:scaleX(0.9000);">현</div><div class="t" style="left:2567.8px;top:1879.4px;font-size:27.47px;color:#2a2d32;font-weight:700;transform:scaleX(0.9000);">현</div><div class="t" style="left:2632.8px;top:1879.4px;font-size:27.47px;color:#2a2d32;font-weight:700;transform:scaleX(0.9000);">현</div><div class="t" style="left:2697.8px;top:1879.4px;font-size:27.47px;color:#2a2d32;font-weight:700;transform:scaleX(0.9000);">현</div><div class="t" style="left:2762.8px;top:1879.4px;font-size:27.47px;color:#2a2d32;font-weight:700;transform:scaleX(0.9000);">현</div><div class="t" style="left:486.2px;top:1978.0px;font-size:43.48px;color:#232a36;font-weight:400;">12</div><div class="t" style="left:667.9px;top:1983.9px;font-size:35.05px;color:#30353d;font-weight:700;transform:scaleX(0.8945);-webkit-text-stroke:0.4px #30353d;">홍길동</div><div class="t" style="left:1254.4px;top:1978.7px;font-size:42.25px;color:#3d424a;font-weight:400;transform:scaleX(0.9573);">010-1234-5678</div><div class="t" style="left:1630.4px;top:1978.7px;font-size:42.25px;color:#3d424a;font-weight:400;transform:scaleX(0.9573);">010-1234-5678</div><div class="t" style="left:2006.5px;top:1978.7px;font-size:38.33px;color:#3a3f47;font-weight:400;transform:scaleX(0.7986);">대치고등학교</div><div class="t" style="left:2307.8px;top:1986.8px;font-size:27.47px;color:#2a2d32;font-weight:700;transform:scaleX(0.9000);">현</div><div class="t" style="left:2372.8px;top:1986.8px;font-size:27.47px;color:#2a2d32;font-weight:700;transform:scaleX(0.9000);">현</div><div class="t" style="left:2437.8px;top:1986.8px;font-size:27.47px;color:#2a2d32;font-weight:700;transform:scaleX(0.9000);">현</div><div class="t" style="left:2502.8px;top:1986.8px;font-size:27.47px;color:#2a2d32;font-weight:700;transform:scaleX(0.9000);">현</div><div class="t" style="left:2567.8px;top:1986.8px;font-size:27.47px;color:#2a2d32;font-weight:700;transform:scaleX(0.9000);">현</div><div class="t" style="left:2632.8px;top:1986.8px;font-size:27.47px;color:#2a2d32;font-weight:700;transform:scaleX(0.9000);">현</div><div class="t" style="left:2697.8px;top:1986.8px;font-size:27.47px;color:#2a2d32;font-weight:700;transform:scaleX(0.9000);">현</div><div class="t" style="left:2762.8px;top:1986.8px;font-size:27.47px;color:#2a2d32;font-weight:700;transform:scaleX(0.9000);">현</div><div class="t" style="left:485.8px;top:2085.4px;font-size:43.48px;color:#232a36;font-weight:400;">13</div><div class="t" style="left:438.7px;top:2092.9px;font-size:30.00px;color:#22a34a;font-weight:400;">2</div><div class="t" style="left:667.9px;top:2091.3px;font-size:35.05px;color:#30353d;font-weight:700;transform:scaleX(0.8945);-webkit-text-stroke:0.4px #30353d;">홍길동</div><div class="t" style="left:1254.4px;top:2086.1px;font-size:42.25px;color:#3d424a;font-weight:400;transform:scaleX(0.9573);">010-1234-5678</div><div class="t" style="left:1630.4px;top:2086.1px;font-size:42.25px;color:#3d424a;font-weight:400;transform:scaleX(0.9573);">010-1234-5678</div><div class="t" style="left:2006.5px;top:2086.1px;font-size:38.33px;color:#3a3f47;font-weight:400;transform:scaleX(0.7986);">대치고등학교</div><div class="t" style="left:2307.8px;top:2094.2px;font-size:27.47px;color:#2a2d32;font-weight:700;transform:scaleX(0.9000);">현</div><div class="t" style="left:2372.8px;top:2094.2px;font-size:27.47px;color:#2a2d32;font-weight:700;transform:scaleX(0.9000);">현</div><div class="t" style="left:2437.8px;top:2094.2px;font-size:27.47px;color:#2a2d32;font-weight:700;transform:scaleX(0.9000);">현</div><div class="t" style="left:2502.8px;top:2094.2px;font-size:27.47px;color:#2a2d32;font-weight:700;transform:scaleX(0.9000);">현</div><div class="t" style="left:2567.8px;top:2094.2px;font-size:27.47px;color:#2a2d32;font-weight:700;transform:scaleX(0.9000);">현</div><div class="t" style="left:2632.9px;top:2094.2px;font-size:27.47px;color:#2f7cf2;font-weight:700;transform:scaleX(0.9000);">영</div><div class="t" style="left:2697.8px;top:2094.2px;font-size:27.47px;color:#2a2d32;font-weight:700;transform:scaleX(0.9000);">현</div><div class="t" style="left:2762.8px;top:2094.2px;font-size:27.47px;color:#2a2d32;font-weight:700;transform:scaleX(0.9000);">현</div><div class="t" style="left:485.3px;top:2192.8px;font-size:43.48px;color:#232a36;font-weight:400;">14</div><div class="t" style="left:667.9px;top:2198.7px;font-size:35.05px;color:#30353d;font-weight:700;transform:scaleX(0.8945);-webkit-text-stroke:0.4px #30353d;">홍길동</div><div class="t" style="left:1254.4px;top:2193.5px;font-size:42.25px;color:#3d424a;font-weight:400;transform:scaleX(0.9573);">010-1234-5678</div><div class="t" style="left:1630.4px;top:2193.5px;font-size:42.25px;color:#3d424a;font-weight:400;transform:scaleX(0.9573);">010-1234-5678</div><div class="t" style="left:2006.5px;top:2193.5px;font-size:38.33px;color:#3a3f47;font-weight:400;transform:scaleX(0.7986);">대치고등학교</div><div class="t" style="left:2307.8px;top:2201.6px;font-size:27.47px;color:#2a2d32;font-weight:700;transform:scaleX(0.9000);">현</div><div class="t" style="left:2372.8px;top:2201.6px;font-size:27.47px;color:#2a2d32;font-weight:700;transform:scaleX(0.9000);">현</div><div class="t" style="left:2437.8px;top:2201.6px;font-size:27.47px;color:#2a2d32;font-weight:700;transform:scaleX(0.9000);">현</div><div class="t" style="left:2502.8px;top:2201.6px;font-size:27.47px;color:#2a2d32;font-weight:700;transform:scaleX(0.9000);">현</div><div class="t" style="left:2567.8px;top:2201.6px;font-size:27.47px;color:#2a2d32;font-weight:700;transform:scaleX(0.9000);">현</div><div class="t" style="left:2632.8px;top:2201.6px;font-size:27.47px;color:#2a2d32;font-weight:700;transform:scaleX(0.9000);">현</div><div class="t" style="left:2697.8px;top:2201.6px;font-size:27.47px;color:#2a2d32;font-weight:700;transform:scaleX(0.9000);">현</div><div class="t" style="left:2762.8px;top:2201.6px;font-size:27.47px;color:#2a2d32;font-weight:700;transform:scaleX(0.9000);">현</div><div class="t" style="left:485.8px;top:2300.2px;font-size:43.48px;color:#232a36;font-weight:400;">15</div><div class="t" style="left:438.7px;top:2307.7px;font-size:30.00px;color:#22a34a;font-weight:400;">1</div><div class="t" style="left:667.9px;top:2306.1px;font-size:35.05px;color:#30353d;font-weight:700;transform:scaleX(0.8945);-webkit-text-stroke:0.4px #30353d;">홍길동</div><div class="t" style="left:1254.4px;top:2300.9px;font-size:42.25px;color:#3d424a;font-weight:400;transform:scaleX(0.9573);">010-1234-5678</div><div class="t" style="left:1630.4px;top:2300.9px;font-size:42.25px;color:#3d424a;font-weight:400;transform:scaleX(0.9573);">010-1234-5678</div><div class="t" style="left:2006.5px;top:2300.9px;font-size:38.33px;color:#3a3f47;font-weight:400;transform:scaleX(0.7986);">대치고등학교</div><div class="t" style="left:2307.8px;top:2309.0px;font-size:27.47px;color:#2a2d32;font-weight:700;transform:scaleX(0.9000);">현</div><div class="t" style="left:2372.8px;top:2309.0px;font-size:27.47px;color:#2a2d32;font-weight:700;transform:scaleX(0.9000);">현</div><div class="t" style="left:2437.9px;top:2309.0px;font-size:27.47px;color:#2f7cf2;font-weight:700;transform:scaleX(0.9000);">영</div><div class="t" style="left:2502.9px;top:2309.0px;font-size:27.47px;color:#2f7cf2;font-weight:700;transform:scaleX(0.9000);">영</div><div class="t" style="left:2567.8px;top:2309.0px;font-size:27.47px;color:#2a2d32;font-weight:700;transform:scaleX(0.9000);">현</div><div class="t" style="left:2632.8px;top:2309.0px;font-size:27.47px;color:#2a2d32;font-weight:700;transform:scaleX(0.9000);">현</div><div class="t" style="left:2697.8px;top:2309.0px;font-size:27.47px;color:#2a2d32;font-weight:700;transform:scaleX(0.9000);">현</div><div class="t" style="left:2762.8px;top:2309.0px;font-size:27.47px;color:#2a2d32;font-weight:700;transform:scaleX(0.9000);">현</div><div class="t" style="left:485.8px;top:2407.6px;font-size:43.48px;color:#232a36;font-weight:400;">16</div><div class="t" style="left:438.7px;top:2415.1px;font-size:30.00px;color:#22a34a;font-weight:400;">2</div><div class="t" style="left:667.9px;top:2413.5px;font-size:35.05px;color:#30353d;font-weight:700;transform:scaleX(0.8945);-webkit-text-stroke:0.4px #30353d;">홍길동</div><div class="t" style="left:1254.4px;top:2408.3px;font-size:42.25px;color:#3d424a;font-weight:400;transform:scaleX(0.9573);">010-1234-5678</div><div class="t" style="left:1630.4px;top:2408.3px;font-size:42.25px;color:#3d424a;font-weight:400;transform:scaleX(0.9573);">010-1234-5678</div><div class="t" style="left:2006.5px;top:2408.3px;font-size:38.33px;color:#3a3f47;font-weight:400;transform:scaleX(0.7986);">대치고등학교</div><div class="t" style="left:2307.8px;top:2416.4px;font-size:27.47px;color:#2a2d32;font-weight:700;transform:scaleX(0.9000);">현</div><div class="t" style="left:2372.8px;top:2416.4px;font-size:27.47px;color:#2a2d32;font-weight:700;transform:scaleX(0.9000);">현</div><div class="t" style="left:2437.8px;top:2416.4px;font-size:27.47px;color:#2a2d32;font-weight:700;transform:scaleX(0.9000);">현</div><div class="t" style="left:2502.8px;top:2416.4px;font-size:27.47px;color:#2a2d32;font-weight:700;transform:scaleX(0.9000);">현</div><div class="t" style="left:2567.8px;top:2416.4px;font-size:27.47px;color:#2a2d32;font-weight:700;transform:scaleX(0.9000);">현</div><div class="t" style="left:2632.8px;top:2416.4px;font-size:27.47px;color:#2a2d32;font-weight:700;transform:scaleX(0.9000);">현</div><div class="t" style="left:2697.8px;top:2416.4px;font-size:27.47px;color:#2a2d32;font-weight:700;transform:scaleX(0.9000);">현</div><div class="t" style="left:2763.5px;top:2416.4px;font-size:27.47px;color:#1f3fcf;font-weight:700;transform:scaleX(0.9000);">지</div><div class="t" style="left:486.2px;top:2515.0px;font-size:43.48px;color:#232a36;font-weight:400;">17</div><div class="t" style="left:667.9px;top:2520.9px;font-size:35.05px;color:#30353d;font-weight:700;transform:scaleX(0.8945);-webkit-text-stroke:0.4px #30353d;">홍길동</div><div class="t" style="left:1254.4px;top:2515.7px;font-size:42.25px;color:#3d424a;font-weight:400;transform:scaleX(0.9573);">010-1234-5678</div><div class="t" style="left:1630.4px;top:2515.7px;font-size:42.25px;color:#3d424a;font-weight:400;transform:scaleX(0.9573);">010-1234-5678</div><div class="t" style="left:2006.5px;top:2515.7px;font-size:38.33px;color:#3a3f47;font-weight:400;transform:scaleX(0.7986);">대치고등학교</div><div class="t" style="left:2307.8px;top:2523.8px;font-size:27.47px;color:#2a2d32;font-weight:700;transform:scaleX(0.9000);">현</div><div class="t" style="left:2372.8px;top:2523.8px;font-size:27.47px;color:#2a2d32;font-weight:700;transform:scaleX(0.9000);">현</div><div class="t" style="left:2437.8px;top:2523.8px;font-size:27.47px;color:#2a2d32;font-weight:700;transform:scaleX(0.9000);">현</div><div class="t" style="left:2502.8px;top:2523.8px;font-size:27.47px;color:#2a2d32;font-weight:700;transform:scaleX(0.9000);">현</div><div class="t" style="left:2567.8px;top:2523.8px;font-size:27.47px;color:#2a2d32;font-weight:700;transform:scaleX(0.9000);">현</div><div class="t" style="left:2632.8px;top:2523.8px;font-size:27.47px;color:#2a2d32;font-weight:700;transform:scaleX(0.9000);">현</div><div class="t" style="left:2697.8px;top:2523.8px;font-size:27.47px;color:#2a2d32;font-weight:700;transform:scaleX(0.9000);">현</div><div class="t" style="left:2762.8px;top:2523.8px;font-size:27.47px;color:#2a2d32;font-weight:700;transform:scaleX(0.9000);">현</div></div></body></html>
